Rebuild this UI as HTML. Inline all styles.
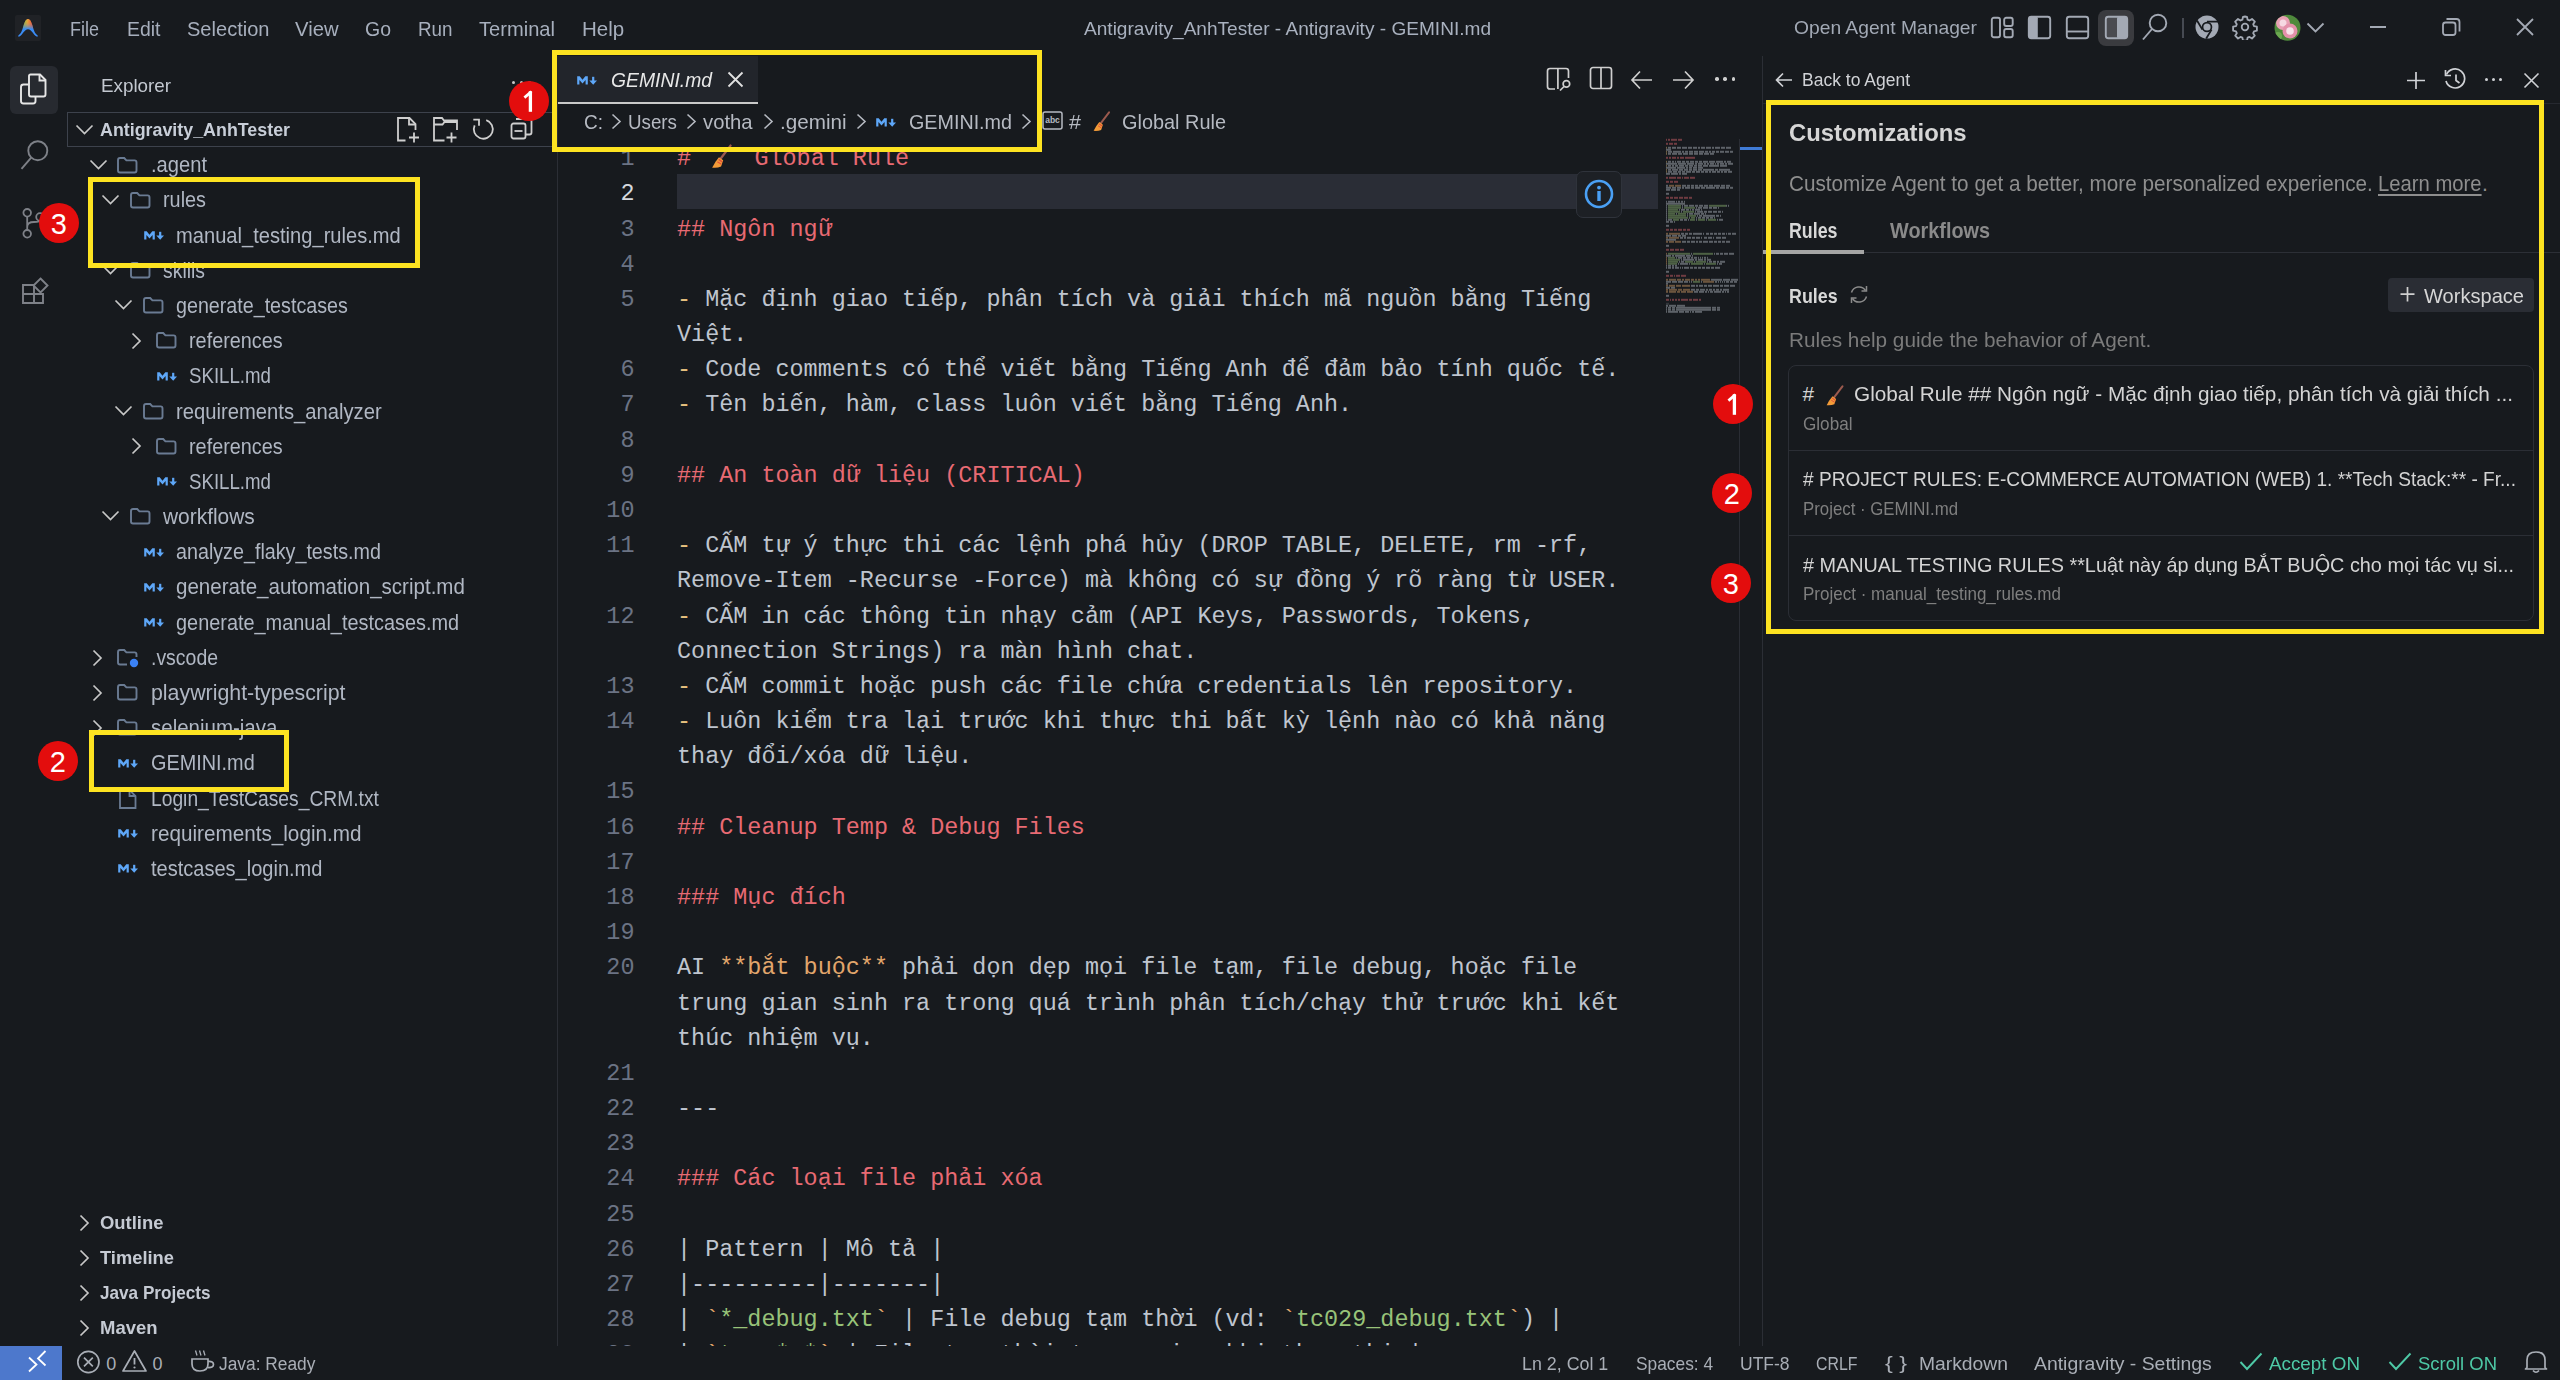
<!DOCTYPE html>
<html><head><meta charset="utf-8"><style>
html,body{margin:0;padding:0;}
body{width:2560px;height:1380px;background:#171a1e;position:relative;overflow:hidden;}
.t{position:absolute;white-space:pre;transform-origin:0 0;}
.r{position:absolute;}
.badge{width:40px;height:40px;border-radius:50%;background:#e30d0d;}
</style></head><body>
<div class="r" style="left:15px;top:15px;width:26px;height:26px;background:#202226;border-radius:2px;"></div>
<svg class="r" style="left:15px;top:15px;" width="26" height="26" viewBox="0 0 26 26"><defs><linearGradient id="lgv" x1="0" y1="0" x2="0" y2="1"><stop offset="0.15" stop-color="#ec8a3c"/><stop offset="0.55" stop-color="#3a8cf2"/><stop offset="1" stop-color="#3b8cf7"/></linearGradient><linearGradient id="lgh" x1="0" y1="0" x2="1" y2="0"><stop offset="0.3" stop-color="#7cc84e"/><stop offset="0.48" stop-color="#e3a43a"/><stop offset="0.68" stop-color="#f0503c"/></linearGradient><linearGradient id="lgm" x1="0" y1="0" x2="0" y2="1"><stop offset="0.2" stop-color="#fff"/><stop offset="0.55" stop-color="#000"/></linearGradient><mask id="mk"><rect width="26" height="26" fill="url(#lgm)"/></mask></defs><path id="lp" d="M3.6 20.2C6.8 18 7.6 13.5 8.7 10C10 6 11.3 4 13 4C14.7 4 16 6 17.3 10C18.4 13.5 19.2 18 22.4 20.2C23.2 20.8 22.8 22 21.6 21.6C18.2 20 16.8 14.2 13 14.2C9.2 14.2 7.8 20 4.4 21.6C3.2 22 2.8 20.8 3.6 20.2Z" fill="url(#lgv)"/><path d="M3.6 20.2C6.8 18 7.6 13.5 8.7 10C10 6 11.3 4 13 4C14.7 4 16 6 17.3 10C18.4 13.5 19.2 18 22.4 20.2C23.2 20.8 22.8 22 21.6 21.6C18.2 20 16.8 14.2 13 14.2C9.2 14.2 7.8 20 4.4 21.6C3.2 22 2.8 20.8 3.6 20.2Z" fill="url(#lgh)" mask="url(#mk)"/></svg>
<div class="t" style="transform:scaleX(0.8613);left:70.4px;top:18.64px;font-size:20.9px;line-height:20.9px;color:#a7afbd;font-family:'Liberation Sans', sans-serif;">File</div>
<div class="t" style="transform:scaleX(0.9306);left:126.8px;top:18.64px;font-size:20.9px;line-height:20.9px;color:#a7afbd;font-family:'Liberation Sans', sans-serif;">Edit</div>
<div class="t" style="transform:scaleX(0.9598);left:186.5px;top:18.64px;font-size:20.9px;line-height:20.9px;color:#a7afbd;font-family:'Liberation Sans', sans-serif;">Selection</div>
<div class="t" style="transform:scaleX(0.9687);left:295.3px;top:18.64px;font-size:20.9px;line-height:20.9px;color:#a7afbd;font-family:'Liberation Sans', sans-serif;">View</div>
<div class="t" style="transform:scaleX(0.9327);left:365px;top:18.64px;font-size:20.9px;line-height:20.9px;color:#a7afbd;font-family:'Liberation Sans', sans-serif;">Go</div>
<div class="t" style="transform:scaleX(0.9001);left:417.5px;top:18.64px;font-size:20.9px;line-height:20.9px;color:#a7afbd;font-family:'Liberation Sans', sans-serif;">Run</div>
<div class="t" style="transform:scaleX(0.9626);left:479px;top:18.64px;font-size:20.9px;line-height:20.9px;color:#a7afbd;font-family:'Liberation Sans', sans-serif;">Terminal</div>
<div class="t" style="transform:scaleX(0.9821);left:581.6px;top:18.64px;font-size:20.9px;line-height:20.9px;color:#a7afbd;font-family:'Liberation Sans', sans-serif;">Help</div>
<div class="t" style="transform:scaleX(1.0038);left:1084px;top:18.85px;font-size:19px;line-height:19px;color:#a9b1bf;font-family:'Liberation Sans', sans-serif;">Antigravity_AnhTester - Antigravity - GEMINI.md</div>
<div class="t" style="transform:scaleX(1.0404);left:1793.7px;top:18.98px;font-size:18.5px;line-height:18.5px;color:#a2a9b5;font-family:'Liberation Sans', sans-serif;">Open Agent Manager</div>
<svg class="r" style="left:1990px;top:16px;" width="25" height="23" viewBox="0 0 25 23"><rect x="1.8" y="1.8" width="8.2" height="19.4" rx="2" fill="none" stroke="#a3a9b4" stroke-width="1.9"/><rect x="14.2" y="1.8" width="8.5" height="8.2" rx="2" fill="none" stroke="#a3a9b4" stroke-width="1.9"/><rect x="14.2" y="13" width="8.5" height="8.2" rx="2" fill="none" stroke="#a3a9b4" stroke-width="1.9"/></svg>
<svg class="r" style="left:2027px;top:15px;" width="25" height="25" viewBox="0 0 25 25"><rect x="1.8" y="1.8" width="21.4" height="21.4" rx="2.5" fill="none" stroke="#a3a9b4" stroke-width="1.9"/><rect x="1.8" y="1.8" width="9" height="21.4" rx="1.5" fill="#a3a9b4"/></svg>
<svg class="r" style="left:2065px;top:15px;" width="25" height="25" viewBox="0 0 25 25"><rect x="1.8" y="1.8" width="21.4" height="21.4" rx="2.5" fill="none" stroke="#a3a9b4" stroke-width="1.9"/><path d="M1.8 16.5H23.2" stroke="#a3a9b4" stroke-width="1.9"/></svg>
<div class="r" style="left:2098px;top:10px;width:36px;height:36px;background:#3a3b3f;border-radius:8px;"></div>
<svg class="r" style="left:2104px;top:15px;" width="25" height="25" viewBox="0 0 25 25"><rect x="1.8" y="1.8" width="21.4" height="21.4" rx="2.5" fill="#4a4b50" stroke="#a3a9b4" stroke-width="1.9"/><rect x="13" y="1.8" width="10.2" height="21.4" rx="1.5" fill="#a3a9b4"/></svg>
<svg class="r" style="left:2141px;top:13px;" width="28" height="28" viewBox="0 0 28 28"><circle cx="17" cy="10" r="8.3" fill="none" stroke="#a3a9b4" stroke-width="1.9"/><path d="M11 16L2 26.5" stroke="#a3a9b4" stroke-width="1.9"/></svg>
<div class="r" style="left:2182px;top:18px;width:1.5px;height:20px;background:#464a52;"></div>
<svg class="r" style="left:2194px;top:14px;" width="26" height="26" viewBox="0 0 26 26"><circle cx="13" cy="13" r="11.5" fill="#a3a9b4"/><circle cx="13" cy="13" r="5.3" fill="#171a1e"/><circle cx="13" cy="13" r="3.6" fill="#a3a9b4"/><path d="M13 7.7H24M8.4 15.6L3 6.5M17.6 15.6L12.2 24.5" stroke="#171a1e" stroke-width="1.8"/></svg>
<svg class="r" style="left:2232px;top:14px;" width="26" height="26" viewBox="0 0 26 26"><path d="M13 2.5l2 .3.6 2.9 1.9.8 2.5-1.6 2.8 2.8-1.6 2.5.8 1.9 2.9.6v4l-2.9.6-.8 1.9 1.6 2.5-2.8 2.8-2.5-1.6-1.9.8-.6 2.9h-4l-.6-2.9-1.9-.8-2.5 1.6-2.8-2.8 1.6-2.5-.8-1.9-2.9-.6v-4l2.9-.6.8-1.9-1.6-2.5 2.8-2.8 2.5 1.6 1.9-.8.6-2.9z" fill="none" stroke="#a3a9b4" stroke-width="1.8" stroke-linejoin="round"/><circle cx="13" cy="13" r="3.3" fill="none" stroke="#a3a9b4" stroke-width="1.8"/></svg>
<svg class="r" style="left:2274px;top:14px;" width="28" height="28" viewBox="0 0 28 28"><defs><clipPath id="av"><circle cx="13.5" cy="13.8" r="13"/></clipPath></defs><g clip-path="url(#av)"><rect width="28" height="28" fill="#4f8a3c"/><circle cx="9" cy="9" r="7" fill="#e8a0b4"/><circle cx="9" cy="9" r="3.5" fill="#f6d9e2"/><circle cx="16" cy="17" r="7.5" fill="#e391aa"/><circle cx="16" cy="17" r="3.8" fill="#f8e2ea"/><circle cx="4" cy="22" r="4" fill="#6aa84f"/></g></svg>
<svg class="r" style="left:2306px;top:22px;" width="19" height="12" viewBox="0 0 19 12"><path d="M1.5 1.5L9.5 9.5L17.5 1.5" fill="none" stroke="#a3a9b4" stroke-width="1.8"/></svg>
<div class="r" style="left:2370px;top:26px;width:16px;height:2px;background:#a3a9b4;"></div>
<svg class="r" style="left:2442px;top:18px;" width="19" height="18" viewBox="0 0 19 18"><rect x="1" y="4.5" width="12.5" height="12.5" rx="2.5" fill="none" stroke="#a3a9b4" stroke-width="1.8"/><path d="M4.5 1H14.5Q17.5 1 17.5 4V13.5" fill="none" stroke="#a3a9b4" stroke-width="1.8"/></svg>
<svg class="r" style="left:2516px;top:18px;" width="18" height="18" viewBox="0 0 18 18"><path d="M1 1L17 17M17 1L1 17" stroke="#a3a9b4" stroke-width="1.8"/></svg>
<div class="r" style="left:10px;top:66px;width:48px;height:48px;background:#272a30;border-radius:6px;"></div>
<svg class="r" style="left:19px;top:73px;" width="30" height="32" viewBox="0 0 30 32"><path d="M9.5 11.5H4.5Q2 11.5 2 14V28Q2 30.5 4.5 30.5H14Q16.5 30.5 16.5 28V24" fill="none" stroke="#e6e6e6" stroke-width="1.9"/><path d="M10 3Q10 1.5 11.5 1.5H21L26.5 7V21.5Q26.5 23.5 24.5 23.5H12Q10 23.5 10 21.5Z" fill="none" stroke="#e6e6e6" stroke-width="1.9"/><path d="M20.5 1.5V7.5H26.5" fill="none" stroke="#e6e6e6" stroke-width="1.9"/></svg>
<svg class="r" style="left:19px;top:139px;" width="32" height="33" viewBox="0 0 32 33"><circle cx="18.8" cy="11.7" r="9.5" fill="none" stroke="#7e8188" stroke-width="1.9"/><path d="M12.2 18.7L2.5 29.8" stroke="#7e8188" stroke-width="1.9"/></svg>
<svg class="r" style="left:20px;top:205px;" width="30" height="34" viewBox="0 0 30 34"><circle cx="7.2" cy="7.8" r="3.8" fill="none" stroke="#7e8188" stroke-width="1.8"/><circle cx="7.2" cy="28.8" r="3.8" fill="none" stroke="#7e8188" stroke-width="1.8"/><circle cx="20" cy="12" r="3.8" fill="none" stroke="#7e8188" stroke-width="1.8"/><path d="M7.2 11.6V25M7.2 22Q7.2 17 14 17Q20 17 20 15.8" fill="none" stroke="#7e8188" stroke-width="1.8"/></svg>
<svg class="r" style="left:21px;top:276px;" width="30" height="30" viewBox="0 0 30 30"><path d="M2 9H13V27H2ZM2 18H22V27H13" fill="none" stroke="#7e8188" stroke-width="1.9"/><path d="M19.5 2.5L26.5 9.5L19.5 16.5L12.5 9.5Z" fill="none" stroke="#7e8188" stroke-width="1.9"/></svg>
<div class="t" style="transform:scaleX(1.0161);left:100.6px;top:76.58px;font-size:18.5px;line-height:18.5px;color:#c3c8d0;font-family:'Liberation Sans', sans-serif;">Explorer</div>
<div class="r" style="left:511.5px;top:81px;width:3.2px;height:3.2px;background:#c8c8c8;border-radius:50%;"></div>
<div class="r" style="left:519.5px;top:81px;width:3.2px;height:3.2px;background:#c8c8c8;border-radius:50%;"></div>
<div class="r" style="left:527.5px;top:81px;width:3.2px;height:3.2px;background:#c8c8c8;border-radius:50%;"></div>
<div class="r" style="left:67px;top:112px;width:488px;height:33px;border:1px solid #3d424c;"></div>
<svg class="r" style="left:75px;top:124px;" width="19" height="11" viewBox="0 0 19 11"><path d="M1.5 1.5L9.5 9.5L17.5 1.5" fill="none" stroke="#c8c8c8" stroke-width="1.7"/></svg>
<div class="t" style="transform:scaleX(0.9594);left:99.5px;top:121.09px;font-size:18.6px;line-height:18.6px;color:#c8ced8;font-family:'Liberation Sans', sans-serif;font-weight:700;">Antigravity_AnhTester</div>
<svg class="r" style="left:396px;top:116px;" width="27" height="28" viewBox="0 0 27 28"><path d="M9.5 24.5H2V2H13.5L19.5 8V14" fill="none" stroke="#cfcfcf" stroke-width="1.8"/><path d="M13 2V8.5H19.5" fill="none" stroke="#cfcfcf" stroke-width="1.8"/><path d="M18 16.5V26.5M13 21.5H23" stroke="#cfcfcf" stroke-width="1.8"/></svg>
<svg class="r" style="left:432px;top:116px;" width="28" height="28" viewBox="0 0 28 28"><path d="M12.5 24.5H2V2H10L12 4.5H25V14" fill="none" stroke="#cfcfcf" stroke-width="1.8"/><path d="M2 8.5H10.5L12.5 6H25" fill="none" stroke="#cfcfcf" stroke-width="1.8"/><path d="M19.5 16.5V26.5M14.5 21.5H24.5" stroke="#cfcfcf" stroke-width="1.8"/></svg>
<svg class="r" style="left:472px;top:117px;" width="24" height="24" viewBox="0 0 24 24"><path d="M14.24 3.17A9.5 9.5 0 1 1 2.62 8.34" fill="none" stroke="#cfcfcf" stroke-width="1.8"/><path d="M1.3 2.6H7V8.7" fill="none" stroke="#cfcfcf" stroke-width="1.8"/></svg>
<svg class="r" style="left:510px;top:117px;" width="24" height="24" viewBox="0 0 24 24"><rect x="1.5" y="6.5" width="14" height="15" rx="2" fill="none" stroke="#cfcfcf" stroke-width="1.8"/><path d="M6 2H19.5Q21.5 2 21.5 4V15.5Q21.5 17.5 19.5 17.5H16" fill="none" stroke="#cfcfcf" stroke-width="1.8"/><path d="M4.5 14H12.5" stroke="#cfcfcf" stroke-width="1.8"/></svg>
<svg class="r" style="left:88.5px;top:158.6px;" width="19" height="11" viewBox="0 0 19 11"><path d="M1.5 1.5L9.5 9.5L17.5 1.5" fill="none" stroke="#c8c8c8" stroke-width="1.7"/></svg>
<svg class="r" style="left:116.0px;top:155.5px;" width="23" height="20" viewBox="0 0 23 20"><path d="M2 4.2Q2 2 4 2H8.2L10.4 4.4H18.6Q20.5 4.4 20.5 6.4V14.6Q20.5 16.5 18.6 16.5H4Q2 16.5 2 14.5Z" fill="none" stroke="#6a7b93" stroke-width="1.9"/></svg>
<div class="t" style="transform:scaleX(0.9414);left:150.6px;top:155.31px;font-size:21.4px;line-height:21.4px;color:#b0b7c3;font-family:'Liberation Sans', sans-serif;">.agent</div>
<svg class="r" style="left:101.35px;top:193.78px;" width="19" height="11" viewBox="0 0 19 11"><path d="M1.5 1.5L9.5 9.5L17.5 1.5" fill="none" stroke="#c8c8c8" stroke-width="1.7"/></svg>
<svg class="r" style="left:128.85px;top:190.68px;" width="23" height="20" viewBox="0 0 23 20"><path d="M2 4.2Q2 2 4 2H8.2L10.4 4.4H18.6Q20.5 4.4 20.5 6.4V14.6Q20.5 16.5 18.6 16.5H4Q2 16.5 2 14.5Z" fill="none" stroke="#6a7b93" stroke-width="1.9"/></svg>
<div class="t" style="transform:scaleX(0.9272);left:163.45px;top:190.49px;font-size:21.4px;line-height:21.4px;color:#b0b7c3;font-family:'Liberation Sans', sans-serif;">rules</div>
<svg class="r" style="left:143.7px;top:230.95999999999998px;" width="21" height="10" viewBox="0 0 21 10"><path d="M0.2 8.6V0.2H2.7L5.5 3.7L8.3 0.2H10.8V8.6H8.6V4L5.5 7.6L2.4 4V8.6Z" fill="#5ea7f8"/><rect x="15.1" y="0.8" width="2.2" height="4.4" fill="#5ea7f8"/><path d="M12.3 4.6H20L16.2 8.7Z" fill="#5ea7f8"/></svg>
<div class="t" style="transform:scaleX(0.9406);left:176.29999999999998px;top:225.67px;font-size:21.4px;line-height:21.4px;color:#b0b7c3;font-family:'Liberation Sans', sans-serif;">manual_testing_rules.md</div>
<svg class="r" style="left:101.35px;top:264.14000000000004px;" width="19" height="11" viewBox="0 0 19 11"><path d="M1.5 1.5L9.5 9.5L17.5 1.5" fill="none" stroke="#c8c8c8" stroke-width="1.7"/></svg>
<svg class="r" style="left:128.85px;top:261.04px;" width="23" height="20" viewBox="0 0 23 20"><path d="M2 4.2Q2 2 4 2H8.2L10.4 4.4H18.6Q20.5 4.4 20.5 6.4V14.6Q20.5 16.5 18.6 16.5H4Q2 16.5 2 14.5Z" fill="none" stroke="#6a7b93" stroke-width="1.9"/></svg>
<div class="t" style="transform:scaleX(0.9063);left:163.45px;top:260.85px;font-size:21.4px;line-height:21.4px;color:#b0b7c3;font-family:'Liberation Sans', sans-serif;">skills</div>
<svg class="r" style="left:114.2px;top:299.32000000000005px;" width="19" height="11" viewBox="0 0 19 11"><path d="M1.5 1.5L9.5 9.5L17.5 1.5" fill="none" stroke="#c8c8c8" stroke-width="1.7"/></svg>
<svg class="r" style="left:141.7px;top:296.22px;" width="23" height="20" viewBox="0 0 23 20"><path d="M2 4.2Q2 2 4 2H8.2L10.4 4.4H18.6Q20.5 4.4 20.5 6.4V14.6Q20.5 16.5 18.6 16.5H4Q2 16.5 2 14.5Z" fill="none" stroke="#6a7b93" stroke-width="1.9"/></svg>
<div class="t" style="transform:scaleX(0.9202);left:176.29999999999998px;top:296.03px;font-size:21.4px;line-height:21.4px;color:#b0b7c3;font-family:'Liberation Sans', sans-serif;">generate_testcases</div>
<svg class="r" style="left:130.55px;top:331.90000000000003px;" width="11" height="18" viewBox="0 0 11 18"><path d="M1.5 1.5L9 9L1.5 16.5" fill="none" stroke="#c8c8c8" stroke-width="1.7"/></svg>
<svg class="r" style="left:154.55px;top:331.40000000000003px;" width="23" height="20" viewBox="0 0 23 20"><path d="M2 4.2Q2 2 4 2H8.2L10.4 4.4H18.6Q20.5 4.4 20.5 6.4V14.6Q20.5 16.5 18.6 16.5H4Q2 16.5 2 14.5Z" fill="none" stroke="#6a7b93" stroke-width="1.9"/></svg>
<div class="t" style="transform:scaleX(0.9271);left:189.14999999999998px;top:331.21px;font-size:21.4px;line-height:21.4px;color:#b0b7c3;font-family:'Liberation Sans', sans-serif;">references</div>
<svg class="r" style="left:156.55px;top:371.68000000000006px;" width="21" height="10" viewBox="0 0 21 10"><path d="M0.2 8.6V0.2H2.7L5.5 3.7L8.3 0.2H10.8V8.6H8.6V4L5.5 7.6L2.4 4V8.6Z" fill="#5ea7f8"/><rect x="15.1" y="0.8" width="2.2" height="4.4" fill="#5ea7f8"/><path d="M12.3 4.6H20L16.2 8.7Z" fill="#5ea7f8"/></svg>
<div class="t" style="transform:scaleX(0.8729);left:189.14999999999998px;top:366.39px;font-size:21.4px;line-height:21.4px;color:#b0b7c3;font-family:'Liberation Sans', sans-serif;">SKILL.md</div>
<svg class="r" style="left:114.2px;top:404.86px;" width="19" height="11" viewBox="0 0 19 11"><path d="M1.5 1.5L9.5 9.5L17.5 1.5" fill="none" stroke="#c8c8c8" stroke-width="1.7"/></svg>
<svg class="r" style="left:141.7px;top:401.76px;" width="23" height="20" viewBox="0 0 23 20"><path d="M2 4.2Q2 2 4 2H8.2L10.4 4.4H18.6Q20.5 4.4 20.5 6.4V14.6Q20.5 16.5 18.6 16.5H4Q2 16.5 2 14.5Z" fill="none" stroke="#6a7b93" stroke-width="1.9"/></svg>
<div class="t" style="transform:scaleX(0.9453);left:176.29999999999998px;top:401.57px;font-size:21.4px;line-height:21.4px;color:#b0b7c3;font-family:'Liberation Sans', sans-serif;">requirements_analyzer</div>
<svg class="r" style="left:130.55px;top:437.44000000000005px;" width="11" height="18" viewBox="0 0 11 18"><path d="M1.5 1.5L9 9L1.5 16.5" fill="none" stroke="#c8c8c8" stroke-width="1.7"/></svg>
<svg class="r" style="left:154.55px;top:436.94000000000005px;" width="23" height="20" viewBox="0 0 23 20"><path d="M2 4.2Q2 2 4 2H8.2L10.4 4.4H18.6Q20.5 4.4 20.5 6.4V14.6Q20.5 16.5 18.6 16.5H4Q2 16.5 2 14.5Z" fill="none" stroke="#6a7b93" stroke-width="1.9"/></svg>
<div class="t" style="transform:scaleX(0.9271);left:189.14999999999998px;top:436.75px;font-size:21.4px;line-height:21.4px;color:#b0b7c3;font-family:'Liberation Sans', sans-serif;">references</div>
<svg class="r" style="left:156.55px;top:477.22px;" width="21" height="10" viewBox="0 0 21 10"><path d="M0.2 8.6V0.2H2.7L5.5 3.7L8.3 0.2H10.8V8.6H8.6V4L5.5 7.6L2.4 4V8.6Z" fill="#5ea7f8"/><rect x="15.1" y="0.8" width="2.2" height="4.4" fill="#5ea7f8"/><path d="M12.3 4.6H20L16.2 8.7Z" fill="#5ea7f8"/></svg>
<div class="t" style="transform:scaleX(0.8729);left:189.14999999999998px;top:471.93px;font-size:21.4px;line-height:21.4px;color:#b0b7c3;font-family:'Liberation Sans', sans-serif;">SKILL.md</div>
<svg class="r" style="left:101.35px;top:510.4000000000001px;" width="19" height="11" viewBox="0 0 19 11"><path d="M1.5 1.5L9.5 9.5L17.5 1.5" fill="none" stroke="#c8c8c8" stroke-width="1.7"/></svg>
<svg class="r" style="left:128.85px;top:507.30000000000007px;" width="23" height="20" viewBox="0 0 23 20"><path d="M2 4.2Q2 2 4 2H8.2L10.4 4.4H18.6Q20.5 4.4 20.5 6.4V14.6Q20.5 16.5 18.6 16.5H4Q2 16.5 2 14.5Z" fill="none" stroke="#6a7b93" stroke-width="1.9"/></svg>
<div class="t" style="transform:scaleX(0.9776);left:163.45px;top:507.11px;font-size:21.4px;line-height:21.4px;color:#b0b7c3;font-family:'Liberation Sans', sans-serif;">workflows</div>
<svg class="r" style="left:143.7px;top:547.58px;" width="21" height="10" viewBox="0 0 21 10"><path d="M0.2 8.6V0.2H2.7L5.5 3.7L8.3 0.2H10.8V8.6H8.6V4L5.5 7.6L2.4 4V8.6Z" fill="#5ea7f8"/><rect x="15.1" y="0.8" width="2.2" height="4.4" fill="#5ea7f8"/><path d="M12.3 4.6H20L16.2 8.7Z" fill="#5ea7f8"/></svg>
<div class="t" style="transform:scaleX(0.9215);left:176.29999999999998px;top:542.29px;font-size:21.4px;line-height:21.4px;color:#b0b7c3;font-family:'Liberation Sans', sans-serif;">analyze_flaky_tests.md</div>
<svg class="r" style="left:143.7px;top:582.76px;" width="21" height="10" viewBox="0 0 21 10"><path d="M0.2 8.6V0.2H2.7L5.5 3.7L8.3 0.2H10.8V8.6H8.6V4L5.5 7.6L2.4 4V8.6Z" fill="#5ea7f8"/><rect x="15.1" y="0.8" width="2.2" height="4.4" fill="#5ea7f8"/><path d="M12.3 4.6H20L16.2 8.7Z" fill="#5ea7f8"/></svg>
<div class="t" style="transform:scaleX(0.9603);left:176.29999999999998px;top:577.47px;font-size:21.4px;line-height:21.4px;color:#b0b7c3;font-family:'Liberation Sans', sans-serif;">generate_automation_script.md</div>
<svg class="r" style="left:143.7px;top:617.94px;" width="21" height="10" viewBox="0 0 21 10"><path d="M0.2 8.6V0.2H2.7L5.5 3.7L8.3 0.2H10.8V8.6H8.6V4L5.5 7.6L2.4 4V8.6Z" fill="#5ea7f8"/><rect x="15.1" y="0.8" width="2.2" height="4.4" fill="#5ea7f8"/><path d="M12.3 4.6H20L16.2 8.7Z" fill="#5ea7f8"/></svg>
<div class="t" style="transform:scaleX(0.9300);left:176.29999999999998px;top:612.65px;font-size:21.4px;line-height:21.4px;color:#b0b7c3;font-family:'Liberation Sans', sans-serif;">generate_manual_testcases.md</div>
<svg class="r" style="left:92.0px;top:648.52px;" width="11" height="18" viewBox="0 0 11 18"><path d="M1.5 1.5L9 9L1.5 16.5" fill="none" stroke="#c8c8c8" stroke-width="1.7"/></svg>
<svg class="r" style="left:116.0px;top:648.02px;" width="23" height="20" viewBox="0 0 23 20"><path d="M2 4.2Q2 2 4 2H8.2L10.4 4.4H18.6Q20.5 4.4 20.5 6.4V9" fill="none" stroke="#6a7b93" stroke-width="1.9"/><path d="M11 16.5H4Q2 16.5 2 14.5V4" fill="none" stroke="#6a7b93" stroke-width="1.9"/><circle cx="18" cy="15" r="4.2" fill="#3b82f6"/></svg>
<div class="t" style="transform:scaleX(0.9089);left:150.6px;top:647.83px;font-size:21.4px;line-height:21.4px;color:#b0b7c3;font-family:'Liberation Sans', sans-serif;">.vscode</div>
<svg class="r" style="left:92.0px;top:683.7px;" width="11" height="18" viewBox="0 0 11 18"><path d="M1.5 1.5L9 9L1.5 16.5" fill="none" stroke="#c8c8c8" stroke-width="1.7"/></svg>
<svg class="r" style="left:116.0px;top:683.2px;" width="23" height="20" viewBox="0 0 23 20"><path d="M2 4.2Q2 2 4 2H8.2L10.4 4.4H18.6Q20.5 4.4 20.5 6.4V14.6Q20.5 16.5 18.6 16.5H4Q2 16.5 2 14.5Z" fill="none" stroke="#6a7b93" stroke-width="1.9"/></svg>
<div class="t" style="transform:scaleX(0.9976);left:150.6px;top:683.01px;font-size:21.4px;line-height:21.4px;color:#b0b7c3;font-family:'Liberation Sans', sans-serif;">playwright-typescript</div>
<svg class="r" style="left:92.0px;top:718.88px;" width="11" height="18" viewBox="0 0 11 18"><path d="M1.5 1.5L9 9L1.5 16.5" fill="none" stroke="#c8c8c8" stroke-width="1.7"/></svg>
<svg class="r" style="left:116.0px;top:718.38px;" width="23" height="20" viewBox="0 0 23 20"><path d="M2 4.2Q2 2 4 2H8.2L10.4 4.4H18.6Q20.5 4.4 20.5 6.4V14.6Q20.5 16.5 18.6 16.5H4Q2 16.5 2 14.5Z" fill="none" stroke="#6a7b93" stroke-width="1.9"/></svg>
<div class="t" style="transform:scaleX(0.9578);left:150.6px;top:718.19px;font-size:21.4px;line-height:21.4px;color:#b0b7c3;font-family:'Liberation Sans', sans-serif;">selenium-java</div>
<svg class="r" style="left:118.0px;top:758.66px;" width="21" height="10" viewBox="0 0 21 10"><path d="M0.2 8.6V0.2H2.7L5.5 3.7L8.3 0.2H10.8V8.6H8.6V4L5.5 7.6L2.4 4V8.6Z" fill="#5ea7f8"/><rect x="15.1" y="0.8" width="2.2" height="4.4" fill="#5ea7f8"/><path d="M12.3 4.6H20L16.2 8.7Z" fill="#5ea7f8"/></svg>
<div class="t" style="transform:scaleX(0.9282);left:150.6px;top:753.37px;font-size:21.4px;line-height:21.4px;color:#b0b7c3;font-family:'Liberation Sans', sans-serif;">GEMINI.md</div>
<svg class="r" style="left:118.0px;top:788.24px;" width="20" height="22" viewBox="0 0 20 22"><path d="M2 2H11.5L17.5 8V20H2Z" fill="none" stroke="#6a7b93" stroke-width="1.8"/><path d="M11.5 2V8H17.5" fill="none" stroke="#6a7b93" stroke-width="1.8"/></svg>
<div class="t" style="transform:scaleX(0.9000);left:150.6px;top:788.55px;font-size:21.4px;line-height:21.4px;color:#b0b7c3;font-family:'Liberation Sans', sans-serif;">Login_TestCases_CRM.txt</div>
<svg class="r" style="left:118.0px;top:829.02px;" width="21" height="10" viewBox="0 0 21 10"><path d="M0.2 8.6V0.2H2.7L5.5 3.7L8.3 0.2H10.8V8.6H8.6V4L5.5 7.6L2.4 4V8.6Z" fill="#5ea7f8"/><rect x="15.1" y="0.8" width="2.2" height="4.4" fill="#5ea7f8"/><path d="M12.3 4.6H20L16.2 8.7Z" fill="#5ea7f8"/></svg>
<div class="t" style="transform:scaleX(0.9674);left:150.6px;top:823.73px;font-size:21.4px;line-height:21.4px;color:#b0b7c3;font-family:'Liberation Sans', sans-serif;">requirements_login.md</div>
<svg class="r" style="left:118.0px;top:864.2px;" width="21" height="10" viewBox="0 0 21 10"><path d="M0.2 8.6V0.2H2.7L5.5 3.7L8.3 0.2H10.8V8.6H8.6V4L5.5 7.6L2.4 4V8.6Z" fill="#5ea7f8"/><rect x="15.1" y="0.8" width="2.2" height="4.4" fill="#5ea7f8"/><path d="M12.3 4.6H20L16.2 8.7Z" fill="#5ea7f8"/></svg>
<div class="t" style="transform:scaleX(0.9361);left:150.6px;top:858.91px;font-size:21.4px;line-height:21.4px;color:#b0b7c3;font-family:'Liberation Sans', sans-serif;">testcases_login.md</div>
<svg class="r" style="left:78.5px;top:1214.2px;" width="11" height="18" viewBox="0 0 11 18"><path d="M1.5 1.5L9 9L1.5 16.5" fill="none" stroke="#c8c8c8" stroke-width="1.7"/></svg>
<div class="t" style="transform:scaleX(0.9915);left:99.5px;top:1214.39px;font-size:18.6px;line-height:18.6px;color:#c5cad3;font-family:'Liberation Sans', sans-serif;font-weight:700;">Outline</div>
<svg class="r" style="left:78.5px;top:1249.2px;" width="11" height="18" viewBox="0 0 11 18"><path d="M1.5 1.5L9 9L1.5 16.5" fill="none" stroke="#c8c8c8" stroke-width="1.7"/></svg>
<div class="t" style="transform:scaleX(0.9854);left:99.5px;top:1249.39px;font-size:18.6px;line-height:18.6px;color:#c5cad3;font-family:'Liberation Sans', sans-serif;font-weight:700;">Timeline</div>
<svg class="r" style="left:78.5px;top:1284.2px;" width="11" height="18" viewBox="0 0 11 18"><path d="M1.5 1.5L9 9L1.5 16.5" fill="none" stroke="#c8c8c8" stroke-width="1.7"/></svg>
<div class="t" style="transform:scaleX(0.9216);left:99.5px;top:1284.39px;font-size:18.6px;line-height:18.6px;color:#c5cad3;font-family:'Liberation Sans', sans-serif;font-weight:700;">Java Projects</div>
<svg class="r" style="left:78.5px;top:1319.2px;" width="11" height="18" viewBox="0 0 11 18"><path d="M1.5 1.5L9 9L1.5 16.5" fill="none" stroke="#c8c8c8" stroke-width="1.7"/></svg>
<div class="t" style="transform:scaleX(0.9935);left:99.5px;top:1319.39px;font-size:18.6px;line-height:18.6px;color:#c5cad3;font-family:'Liberation Sans', sans-serif;font-weight:700;">Maven</div>
<div class="r" style="left:557px;top:56px;width:1px;height:1290px;background:#2b2e35;"></div>
<div class="r" style="left:557px;top:56px;width:201px;height:46px;background:#22252b;"></div>
<div class="r" style="left:558px;top:102px;width:200px;height:2.2px;background:#c9c9c9;"></div>
<svg class="r" style="left:577px;top:75.6px;" width="21" height="10" viewBox="0 0 21 10"><path d="M0.2 8.6V0.2H2.7L5.5 3.7L8.3 0.2H10.8V8.6H8.6V4L5.5 7.6L2.4 4V8.6Z" fill="#5ea7f8"/><rect x="15.1" y="0.8" width="2.2" height="4.4" fill="#5ea7f8"/><path d="M12.3 4.6H20L16.2 8.7Z" fill="#5ea7f8"/></svg>
<div class="t" style="transform:scaleX(0.9298);left:610.6px;top:69.82px;font-size:20.8px;line-height:20.8px;color:#e8e8e8;font-family:'Liberation Sans', sans-serif;font-style:italic;">GEMINI.md</div>
<svg class="r" style="left:727px;top:71px;" width="17" height="17" viewBox="0 0 17 17"><path d="M1.5 1.5L15.5 15.5M15.5 1.5L1.5 15.5" stroke="#e0e0e0" stroke-width="1.8"/></svg>
<svg class="r" style="left:1546px;top:67px;" width="26" height="26" viewBox="0 0 26 26"><path d="M11.9 1.5H4Q1.5 1.5 1.5 4V19.5Q1.5 22 4 22H9M11.9 1.5V22M11.9 1.5H20Q22.5 1.5 22.5 4V11" fill="none" stroke="#cfcfcf" stroke-width="1.7"/><circle cx="20.4" cy="16.9" r="3.3" fill="none" stroke="#cfcfcf" stroke-width="1.7"/><path d="M18 19.5L14 23.5" stroke="#cfcfcf" stroke-width="1.7"/></svg>
<svg class="r" style="left:1589px;top:66px;" width="25" height="25" viewBox="0 0 25 25"><rect x="1.5" y="1.5" width="21" height="21" rx="2.5" fill="none" stroke="#cfcfcf" stroke-width="1.7"/><path d="M12 1.5V22.5" stroke="#cfcfcf" stroke-width="1.7"/></svg>
<svg class="r" style="left:1630px;top:70px;" width="24" height="20" viewBox="0 0 24 20"><path d="M10 1.5L2 10L10 18.5M2 10H22" fill="none" stroke="#cfcfcf" stroke-width="1.7"/></svg>
<svg class="r" style="left:1671px;top:70px;" width="24" height="20" viewBox="0 0 24 20"><path d="M14 1.5L22 10L14 18.5M22 10H2" fill="none" stroke="#cfcfcf" stroke-width="1.7"/></svg>
<div class="r" style="left:1715.3px;top:77.3px;width:3.4px;height:3.4px;background:#cfcfcf;border-radius:50%;"></div>
<div class="r" style="left:1723.3999999999999px;top:77.3px;width:3.4px;height:3.4px;background:#cfcfcf;border-radius:50%;"></div>
<div class="r" style="left:1731.5px;top:77.3px;width:3.4px;height:3.4px;background:#cfcfcf;border-radius:50%;"></div>
<div class="t" style="transform:scaleX(0.9129);left:584.3px;top:112.02px;font-size:20.8px;line-height:20.8px;color:#b6bac2;font-family:'Liberation Sans', sans-serif;">C:</div>
<svg class="r" style="left:610.6px;top:113px;" width="11" height="17" viewBox="0 0 11 17"><path d="M1.5 1.5L9 8.5L1.5 15.5" fill="none" stroke="#b6bac2" stroke-width="1.6"/></svg>
<svg class="r" style="left:686px;top:113px;" width="11" height="17" viewBox="0 0 11 17"><path d="M1.5 1.5L9 8.5L1.5 15.5" fill="none" stroke="#b6bac2" stroke-width="1.6"/></svg>
<svg class="r" style="left:763.4px;top:113px;" width="11" height="17" viewBox="0 0 11 17"><path d="M1.5 1.5L9 8.5L1.5 15.5" fill="none" stroke="#b6bac2" stroke-width="1.6"/></svg>
<svg class="r" style="left:856px;top:113px;" width="11" height="17" viewBox="0 0 11 17"><path d="M1.5 1.5L9 8.5L1.5 15.5" fill="none" stroke="#b6bac2" stroke-width="1.6"/></svg>
<svg class="r" style="left:1021px;top:113px;" width="11" height="17" viewBox="0 0 11 17"><path d="M1.5 1.5L9 8.5L1.5 15.5" fill="none" stroke="#b6bac2" stroke-width="1.6"/></svg>
<div class="t" style="transform:scaleX(0.9022);left:628px;top:112.02px;font-size:20.8px;line-height:20.8px;color:#b6bac2;font-family:'Liberation Sans', sans-serif;">Users</div>
<div class="t" style="transform:scaleX(0.9746);left:703.4px;top:112.02px;font-size:20.8px;line-height:20.8px;color:#b6bac2;font-family:'Liberation Sans', sans-serif;">votha</div>
<div class="t" style="transform:scaleX(0.9933);left:780.3px;top:112.02px;font-size:20.8px;line-height:20.8px;color:#b6bac2;font-family:'Liberation Sans', sans-serif;">.gemini</div>
<svg class="r" style="left:876px;top:117.6px;" width="21" height="10" viewBox="0 0 21 10"><path d="M0.2 8.6V0.2H2.7L5.5 3.7L8.3 0.2H10.8V8.6H8.6V4L5.5 7.6L2.4 4V8.6Z" fill="#5ea7f8"/><rect x="15.1" y="0.8" width="2.2" height="4.4" fill="#5ea7f8"/><path d="M12.3 4.6H20L16.2 8.7Z" fill="#5ea7f8"/></svg>
<div class="t" style="transform:scaleX(0.9482);left:908.8px;top:112.02px;font-size:20.8px;line-height:20.8px;color:#b6bac2;font-family:'Liberation Sans', sans-serif;">GEMINI.md</div>
<svg class="r" style="left:1042px;top:111px;" width="21" height="19" viewBox="0 0 21 19"><rect x="1" y="1" width="19" height="17" rx="2" fill="none" stroke="#b6bac2" stroke-width="1.5"/><text x="10.5" y="12.3" font-family="Liberation Sans" font-size="8.5" font-weight="700" fill="#b6bac2" text-anchor="middle">abc</text></svg>
<div class="t" style="transform:scaleX(1.0364);left:1069px;top:112.02px;font-size:20.8px;line-height:20.8px;color:#b6bac2;font-family:'Liberation Sans', sans-serif;">#</div>
<svg class="r" style="left:1091px;top:111px;" width="20" height="22" viewBox="0 0 20 22"><g transform="scale(0.88)"><path d="M20.5 1.5L11 14" stroke="#9c5a4e" stroke-width="2.2" stroke-linecap="round"/><path d="M9.5 12.5L13.5 15.5L11.5 21.5Q8 23 3 22.5Q5.5 17 9.5 12.5Z" fill="#f29b38"/><path d="M9.2 14.6L12.6 17" stroke="#e0503a" stroke-width="1.3"/><path d="M8 16.8L11.8 19.2" stroke="#e0503a" stroke-width="1.1"/></g></svg>
<div class="t" style="transform:scaleX(0.9570);left:1121.6px;top:112.02px;font-size:20.8px;line-height:20.8px;color:#b6bac2;font-family:'Liberation Sans', sans-serif;">Global Rule</div>
<div class="r" style="left:677px;top:174px;width:981px;height:35px;background:#2a2d36;"></div>
<div class="r" style="left:1576px;top:171px;width:46px;height:47px;background:#1d2025;border:1px solid #2f333b;border-radius:7px;box-sizing:border-box;"></div>
<svg class="r" style="left:1583px;top:178px;" width="32" height="32" viewBox="0 0 32 32"><circle cx="16" cy="16" r="13" fill="none" stroke="#4aa0f5" stroke-width="2.6"/><circle cx="16" cy="9.6" r="1.9" fill="#4aa0f5"/><rect x="14.3" y="13" width="3.4" height="10" fill="#4aa0f5"/></svg>
<div class="t" style="left:677px;top:147.18px;font-size:23.45px;line-height:23.45px;color:#e86a73;font-family:'Liberation Mono', monospace;">#</div>
<svg class="r" style="left:709px;top:144px;" width="24" height="26" viewBox="0 0 24 26"><g transform="scale(1.05)"><path d="M20.5 1.5L11 14" stroke="#9c5a4e" stroke-width="2.2" stroke-linecap="round"/><path d="M9.5 12.5L13.5 15.5L11.5 21.5Q8 23 3 22.5Q5.5 17 9.5 12.5Z" fill="#f29b38"/><path d="M9.2 14.6L12.6 17" stroke="#e0503a" stroke-width="1.3"/><path d="M8 16.8L11.8 19.2" stroke="#e0503a" stroke-width="1.1"/></g></svg>
<div class="t" style="left:754.4px;top:147.18px;font-size:23.45px;line-height:23.45px;color:#e86a73;font-family:'Liberation Mono', monospace;">Global Rule</div>
<div class="t" style="left:620.43px;top:147.18px;font-size:23.45px;line-height:23.45px;color:#6b7384;font-family:'Liberation Mono', monospace;">1</div>
<div class="t" style="left:620.43px;top:182.36px;font-size:23.45px;line-height:23.45px;color:#d4d7dd;font-family:'Liberation Mono', monospace;">2</div>
<div class="t" style="left:677px;top:182.36px;font-size:23.45px;line-height:23.45px;color:#bfc5cf;font-family:'Liberation Mono', monospace;"></div>
<div class="t" style="left:620.43px;top:217.54px;font-size:23.45px;line-height:23.45px;color:#6b7384;font-family:'Liberation Mono', monospace;">3</div>
<div class="t" style="left:677px;top:217.54px;font-size:23.45px;line-height:23.45px;color:#bfc5cf;font-family:'Liberation Mono', monospace;"><span style="color:#e86a73">## Ngôn ngữ</span></div>
<div class="t" style="left:620.43px;top:252.72px;font-size:23.45px;line-height:23.45px;color:#6b7384;font-family:'Liberation Mono', monospace;">4</div>
<div class="t" style="left:677px;top:252.72px;font-size:23.45px;line-height:23.45px;color:#bfc5cf;font-family:'Liberation Mono', monospace;"></div>
<div class="t" style="left:620.43px;top:287.90px;font-size:23.45px;line-height:23.45px;color:#6b7384;font-family:'Liberation Mono', monospace;">5</div>
<div class="t" style="left:677px;top:287.90px;font-size:23.45px;line-height:23.45px;color:#bfc5cf;font-family:'Liberation Mono', monospace;"><span style="color:#e6c07e">-</span><span style="color:#bfc5cf"> Mặc định giao tiếp, phân tích và giải thích mã nguồn bằng Tiếng</span></div>
<div class="t" style="left:677px;top:323.08px;font-size:23.45px;line-height:23.45px;color:#bfc5cf;font-family:'Liberation Mono', monospace;"><span style="color:#bfc5cf">Việt.</span></div>
<div class="t" style="left:620.43px;top:358.26px;font-size:23.45px;line-height:23.45px;color:#6b7384;font-family:'Liberation Mono', monospace;">6</div>
<div class="t" style="left:677px;top:358.26px;font-size:23.45px;line-height:23.45px;color:#bfc5cf;font-family:'Liberation Mono', monospace;"><span style="color:#e6c07e">-</span><span style="color:#bfc5cf"> Code comments có thể viết bằng Tiếng Anh để đảm bảo tính quốc tế.</span></div>
<div class="t" style="left:620.43px;top:393.44px;font-size:23.45px;line-height:23.45px;color:#6b7384;font-family:'Liberation Mono', monospace;">7</div>
<div class="t" style="left:677px;top:393.44px;font-size:23.45px;line-height:23.45px;color:#bfc5cf;font-family:'Liberation Mono', monospace;"><span style="color:#e6c07e">-</span><span style="color:#bfc5cf"> Tên biến, hàm, class luôn viết bằng Tiếng Anh.</span></div>
<div class="t" style="left:620.43px;top:428.62px;font-size:23.45px;line-height:23.45px;color:#6b7384;font-family:'Liberation Mono', monospace;">8</div>
<div class="t" style="left:677px;top:428.62px;font-size:23.45px;line-height:23.45px;color:#bfc5cf;font-family:'Liberation Mono', monospace;"></div>
<div class="t" style="left:620.43px;top:463.80px;font-size:23.45px;line-height:23.45px;color:#6b7384;font-family:'Liberation Mono', monospace;">9</div>
<div class="t" style="left:677px;top:463.80px;font-size:23.45px;line-height:23.45px;color:#bfc5cf;font-family:'Liberation Mono', monospace;"><span style="color:#e86a73">## An toàn dữ liệu (CRITICAL)</span></div>
<div class="t" style="left:606.36px;top:498.98px;font-size:23.45px;line-height:23.45px;color:#6b7384;font-family:'Liberation Mono', monospace;">10</div>
<div class="t" style="left:677px;top:498.98px;font-size:23.45px;line-height:23.45px;color:#bfc5cf;font-family:'Liberation Mono', monospace;"></div>
<div class="t" style="left:606.36px;top:534.16px;font-size:23.45px;line-height:23.45px;color:#6b7384;font-family:'Liberation Mono', monospace;">11</div>
<div class="t" style="left:677px;top:534.16px;font-size:23.45px;line-height:23.45px;color:#bfc5cf;font-family:'Liberation Mono', monospace;"><span style="color:#e6c07e">-</span><span style="color:#bfc5cf"> CẤM tự ý thực thi các lệnh phá hủy (DROP TABLE, DELETE, rm -rf,</span></div>
<div class="t" style="left:677px;top:569.34px;font-size:23.45px;line-height:23.45px;color:#bfc5cf;font-family:'Liberation Mono', monospace;"><span style="color:#bfc5cf">Remove-Item -Recurse -Force) mà không có sự đồng ý rõ ràng từ USER.</span></div>
<div class="t" style="left:606.36px;top:604.52px;font-size:23.45px;line-height:23.45px;color:#6b7384;font-family:'Liberation Mono', monospace;">12</div>
<div class="t" style="left:677px;top:604.52px;font-size:23.45px;line-height:23.45px;color:#bfc5cf;font-family:'Liberation Mono', monospace;"><span style="color:#e6c07e">-</span><span style="color:#bfc5cf"> CẤM in các thông tin nhạy cảm (API Keys, Passwords, Tokens,</span></div>
<div class="t" style="left:677px;top:639.70px;font-size:23.45px;line-height:23.45px;color:#bfc5cf;font-family:'Liberation Mono', monospace;"><span style="color:#bfc5cf">Connection Strings) ra màn hình chat.</span></div>
<div class="t" style="left:606.36px;top:674.88px;font-size:23.45px;line-height:23.45px;color:#6b7384;font-family:'Liberation Mono', monospace;">13</div>
<div class="t" style="left:677px;top:674.88px;font-size:23.45px;line-height:23.45px;color:#bfc5cf;font-family:'Liberation Mono', monospace;"><span style="color:#e6c07e">-</span><span style="color:#bfc5cf"> CẤM commit hoặc push các file chứa credentials lên repository.</span></div>
<div class="t" style="left:606.36px;top:710.06px;font-size:23.45px;line-height:23.45px;color:#6b7384;font-family:'Liberation Mono', monospace;">14</div>
<div class="t" style="left:677px;top:710.06px;font-size:23.45px;line-height:23.45px;color:#bfc5cf;font-family:'Liberation Mono', monospace;"><span style="color:#e6c07e">-</span><span style="color:#bfc5cf"> Luôn kiểm tra lại trước khi thực thi bất kỳ lệnh nào có khả năng</span></div>
<div class="t" style="left:677px;top:745.24px;font-size:23.45px;line-height:23.45px;color:#bfc5cf;font-family:'Liberation Mono', monospace;"><span style="color:#bfc5cf">thay đổi/xóa dữ liệu.</span></div>
<div class="t" style="left:606.36px;top:780.42px;font-size:23.45px;line-height:23.45px;color:#6b7384;font-family:'Liberation Mono', monospace;">15</div>
<div class="t" style="left:677px;top:780.42px;font-size:23.45px;line-height:23.45px;color:#bfc5cf;font-family:'Liberation Mono', monospace;"></div>
<div class="t" style="left:606.36px;top:815.60px;font-size:23.45px;line-height:23.45px;color:#6b7384;font-family:'Liberation Mono', monospace;">16</div>
<div class="t" style="left:677px;top:815.60px;font-size:23.45px;line-height:23.45px;color:#bfc5cf;font-family:'Liberation Mono', monospace;"><span style="color:#e86a73">## Cleanup Temp &amp; Debug Files</span></div>
<div class="t" style="left:606.36px;top:850.78px;font-size:23.45px;line-height:23.45px;color:#6b7384;font-family:'Liberation Mono', monospace;">17</div>
<div class="t" style="left:677px;top:850.78px;font-size:23.45px;line-height:23.45px;color:#bfc5cf;font-family:'Liberation Mono', monospace;"></div>
<div class="t" style="left:606.36px;top:885.96px;font-size:23.45px;line-height:23.45px;color:#6b7384;font-family:'Liberation Mono', monospace;">18</div>
<div class="t" style="left:677px;top:885.96px;font-size:23.45px;line-height:23.45px;color:#bfc5cf;font-family:'Liberation Mono', monospace;"><span style="color:#e86a73">### Mục đích</span></div>
<div class="t" style="left:606.36px;top:921.14px;font-size:23.45px;line-height:23.45px;color:#6b7384;font-family:'Liberation Mono', monospace;">19</div>
<div class="t" style="left:677px;top:921.14px;font-size:23.45px;line-height:23.45px;color:#bfc5cf;font-family:'Liberation Mono', monospace;"></div>
<div class="t" style="left:606.36px;top:956.32px;font-size:23.45px;line-height:23.45px;color:#6b7384;font-family:'Liberation Mono', monospace;">20</div>
<div class="t" style="left:677px;top:956.32px;font-size:23.45px;line-height:23.45px;color:#bfc5cf;font-family:'Liberation Mono', monospace;"><span style="color:#bfc5cf">AI </span><span style="color:#e2a66c">**bắt buộc**</span><span style="color:#bfc5cf"> phải dọn dẹp mọi file tạm, file debug, hoặc file</span></div>
<div class="t" style="left:677px;top:991.50px;font-size:23.45px;line-height:23.45px;color:#bfc5cf;font-family:'Liberation Mono', monospace;"><span style="color:#bfc5cf">trung gian sinh ra trong quá trình phân tích/chạy thử trước khi kết</span></div>
<div class="t" style="left:677px;top:1026.68px;font-size:23.45px;line-height:23.45px;color:#bfc5cf;font-family:'Liberation Mono', monospace;"><span style="color:#bfc5cf">thúc nhiệm vụ.</span></div>
<div class="t" style="left:606.36px;top:1061.86px;font-size:23.45px;line-height:23.45px;color:#6b7384;font-family:'Liberation Mono', monospace;">21</div>
<div class="t" style="left:677px;top:1061.86px;font-size:23.45px;line-height:23.45px;color:#bfc5cf;font-family:'Liberation Mono', monospace;"></div>
<div class="t" style="left:606.36px;top:1097.04px;font-size:23.45px;line-height:23.45px;color:#6b7384;font-family:'Liberation Mono', monospace;">22</div>
<div class="t" style="left:677px;top:1097.04px;font-size:23.45px;line-height:23.45px;color:#bfc5cf;font-family:'Liberation Mono', monospace;"><span style="color:#bfc5cf">---</span></div>
<div class="t" style="left:606.36px;top:1132.22px;font-size:23.45px;line-height:23.45px;color:#6b7384;font-family:'Liberation Mono', monospace;">23</div>
<div class="t" style="left:677px;top:1132.22px;font-size:23.45px;line-height:23.45px;color:#bfc5cf;font-family:'Liberation Mono', monospace;"></div>
<div class="t" style="left:606.36px;top:1167.40px;font-size:23.45px;line-height:23.45px;color:#6b7384;font-family:'Liberation Mono', monospace;">24</div>
<div class="t" style="left:677px;top:1167.40px;font-size:23.45px;line-height:23.45px;color:#bfc5cf;font-family:'Liberation Mono', monospace;"><span style="color:#e86a73">### Các loại file phải xóa</span></div>
<div class="t" style="left:606.36px;top:1202.58px;font-size:23.45px;line-height:23.45px;color:#6b7384;font-family:'Liberation Mono', monospace;">25</div>
<div class="t" style="left:677px;top:1202.58px;font-size:23.45px;line-height:23.45px;color:#bfc5cf;font-family:'Liberation Mono', monospace;"></div>
<div class="t" style="left:606.36px;top:1237.76px;font-size:23.45px;line-height:23.45px;color:#6b7384;font-family:'Liberation Mono', monospace;">26</div>
<div class="t" style="left:677px;top:1237.76px;font-size:23.45px;line-height:23.45px;color:#bfc5cf;font-family:'Liberation Mono', monospace;"><span style="color:#bfc5cf">| Pattern | Mô tả |</span></div>
<div class="t" style="left:606.36px;top:1272.94px;font-size:23.45px;line-height:23.45px;color:#6b7384;font-family:'Liberation Mono', monospace;">27</div>
<div class="t" style="left:677px;top:1272.94px;font-size:23.45px;line-height:23.45px;color:#bfc5cf;font-family:'Liberation Mono', monospace;"><span style="color:#bfc5cf">|---------|-------|</span></div>
<div class="t" style="left:606.36px;top:1308.12px;font-size:23.45px;line-height:23.45px;color:#6b7384;font-family:'Liberation Mono', monospace;">28</div>
<div class="t" style="left:677px;top:1308.12px;font-size:23.45px;line-height:23.45px;color:#bfc5cf;font-family:'Liberation Mono', monospace;"><span style="color:#bfc5cf">| </span><span style="color:#e2a66c">`</span><span style="color:#98c379">*_debug.txt</span><span style="color:#e2a66c">`</span><span style="color:#bfc5cf"> | File debug tạm thời (vd: </span><span style="color:#e2a66c">`</span><span style="color:#98c379">tc029_debug.txt</span><span style="color:#e2a66c">`</span><span style="color:#bfc5cf">) |</span></div>
<div class="t" style="left:606.36px;top:1343.30px;font-size:23.45px;line-height:23.45px;color:#6b7384;font-family:'Liberation Mono', monospace;">29</div>
<div class="t" style="left:677px;top:1343.30px;font-size:23.45px;line-height:23.45px;color:#bfc5cf;font-family:'Liberation Mono', monospace;"><span style="color:#bfc5cf">| </span><span style="color:#e2a66c">`</span><span style="color:#98c379">tmp_*.*</span><span style="color:#e2a66c">`</span><span style="color:#bfc5cf"> | File tạm thời trung gian khi thực thi |</span></div>
<svg class="r" style="left:1666px;top:138px;opacity:.42" width="72" height="180"><rect x="0.0" y="0.8" width="1" height="2" fill="#e86a73"/><rect x="2.0" y="0.8" width="2" height="2" fill="#e86a73"/><rect x="5.0" y="0.8" width="6" height="2" fill="#e86a73"/><rect x="12.0" y="0.8" width="4" height="2" fill="#e86a73"/><rect x="0.0" y="4.8" width="2" height="2" fill="#e86a73"/><rect x="3.0" y="4.8" width="4" height="2" fill="#e86a73"/><rect x="8.0" y="4.8" width="3" height="2" fill="#e86a73"/><rect x="0.0" y="8.8" width="1" height="2" fill="#e6c07e"/><rect x="2.0" y="8.8" width="3" height="2" fill="#bfc5cf"/><rect x="6.0" y="8.8" width="4" height="2" fill="#bfc5cf"/><rect x="11.0" y="8.8" width="4" height="2" fill="#bfc5cf"/><rect x="16.0" y="8.8" width="5" height="2" fill="#bfc5cf"/><rect x="22.0" y="8.8" width="4" height="2" fill="#bfc5cf"/><rect x="27.0" y="8.8" width="4" height="2" fill="#bfc5cf"/><rect x="32.0" y="8.8" width="2" height="2" fill="#bfc5cf"/><rect x="35.0" y="8.8" width="4" height="2" fill="#bfc5cf"/><rect x="40.0" y="8.8" width="5" height="2" fill="#bfc5cf"/><rect x="46.0" y="8.8" width="2" height="2" fill="#bfc5cf"/><rect x="49.0" y="8.8" width="5" height="2" fill="#bfc5cf"/><rect x="55.0" y="8.8" width="4" height="2" fill="#bfc5cf"/><rect x="60.0" y="8.8" width="5" height="2" fill="#bfc5cf"/><rect x="0.0" y="10.8" width="5" height="2" fill="#bfc5cf"/><rect x="0.0" y="12.8" width="1" height="2" fill="#e6c07e"/><rect x="2.0" y="12.8" width="4" height="2" fill="#bfc5cf"/><rect x="7.0" y="12.8" width="8" height="2" fill="#bfc5cf"/><rect x="16.0" y="12.8" width="2" height="2" fill="#bfc5cf"/><rect x="19.0" y="12.8" width="3" height="2" fill="#bfc5cf"/><rect x="23.0" y="12.8" width="4" height="2" fill="#bfc5cf"/><rect x="28.0" y="12.8" width="4" height="2" fill="#bfc5cf"/><rect x="33.0" y="12.8" width="5" height="2" fill="#bfc5cf"/><rect x="39.0" y="12.8" width="3" height="2" fill="#bfc5cf"/><rect x="43.0" y="12.8" width="2" height="2" fill="#bfc5cf"/><rect x="46.0" y="12.8" width="3" height="2" fill="#bfc5cf"/><rect x="50.0" y="12.8" width="3" height="2" fill="#bfc5cf"/><rect x="54.0" y="12.8" width="4" height="2" fill="#bfc5cf"/><rect x="59.0" y="12.8" width="4" height="2" fill="#bfc5cf"/><rect x="64.0" y="12.8" width="3" height="2" fill="#bfc5cf"/><rect x="0.0" y="14.8" width="1" height="2" fill="#e6c07e"/><rect x="2.0" y="14.8" width="3" height="2" fill="#bfc5cf"/><rect x="6.0" y="14.8" width="5" height="2" fill="#bfc5cf"/><rect x="12.0" y="14.8" width="4" height="2" fill="#bfc5cf"/><rect x="17.0" y="14.8" width="5" height="2" fill="#bfc5cf"/><rect x="23.0" y="14.8" width="4" height="2" fill="#bfc5cf"/><rect x="28.0" y="14.8" width="4" height="2" fill="#bfc5cf"/><rect x="33.0" y="14.8" width="4" height="2" fill="#bfc5cf"/><rect x="38.0" y="14.8" width="5" height="2" fill="#bfc5cf"/><rect x="44.0" y="14.8" width="4" height="2" fill="#bfc5cf"/><rect x="0.0" y="18.8" width="2" height="2" fill="#e86a73"/><rect x="3.0" y="18.8" width="2" height="2" fill="#e86a73"/><rect x="6.0" y="18.8" width="4" height="2" fill="#e86a73"/><rect x="11.0" y="18.8" width="2" height="2" fill="#e86a73"/><rect x="14.0" y="18.8" width="4" height="2" fill="#e86a73"/><rect x="19.0" y="18.8" width="10" height="2" fill="#e86a73"/><rect x="0.0" y="22.8" width="1" height="2" fill="#e6c07e"/><rect x="2.0" y="22.8" width="3" height="2" fill="#bfc5cf"/><rect x="6.0" y="22.8" width="2" height="2" fill="#bfc5cf"/><rect x="9.0" y="22.8" width="1" height="2" fill="#bfc5cf"/><rect x="11.0" y="22.8" width="4" height="2" fill="#bfc5cf"/><rect x="16.0" y="22.8" width="3" height="2" fill="#bfc5cf"/><rect x="20.0" y="22.8" width="3" height="2" fill="#bfc5cf"/><rect x="24.0" y="22.8" width="4" height="2" fill="#bfc5cf"/><rect x="29.0" y="22.8" width="3" height="2" fill="#bfc5cf"/><rect x="33.0" y="22.8" width="3" height="2" fill="#bfc5cf"/><rect x="37.0" y="22.8" width="5" height="2" fill="#bfc5cf"/><rect x="43.0" y="22.8" width="6" height="2" fill="#bfc5cf"/><rect x="50.0" y="22.8" width="7" height="2" fill="#bfc5cf"/><rect x="58.0" y="22.8" width="2" height="2" fill="#bfc5cf"/><rect x="61.0" y="22.8" width="4" height="2" fill="#bfc5cf"/><rect x="0.0" y="24.8" width="11" height="2" fill="#bfc5cf"/><rect x="12.0" y="24.8" width="8" height="2" fill="#bfc5cf"/><rect x="21.0" y="24.8" width="7" height="2" fill="#bfc5cf"/><rect x="29.0" y="24.8" width="2" height="2" fill="#bfc5cf"/><rect x="32.0" y="24.8" width="5" height="2" fill="#bfc5cf"/><rect x="38.0" y="24.8" width="2" height="2" fill="#bfc5cf"/><rect x="41.0" y="24.8" width="2" height="2" fill="#bfc5cf"/><rect x="44.0" y="24.8" width="4" height="2" fill="#bfc5cf"/><rect x="49.0" y="24.8" width="1" height="2" fill="#bfc5cf"/><rect x="51.0" y="24.8" width="2" height="2" fill="#bfc5cf"/><rect x="54.0" y="24.8" width="4" height="2" fill="#bfc5cf"/><rect x="59.0" y="24.8" width="2" height="2" fill="#bfc5cf"/><rect x="62.0" y="24.8" width="5" height="2" fill="#bfc5cf"/><rect x="0.0" y="26.8" width="1" height="2" fill="#e6c07e"/><rect x="2.0" y="26.8" width="3" height="2" fill="#bfc5cf"/><rect x="6.0" y="26.8" width="2" height="2" fill="#bfc5cf"/><rect x="9.0" y="26.8" width="3" height="2" fill="#bfc5cf"/><rect x="13.0" y="26.8" width="5" height="2" fill="#bfc5cf"/><rect x="19.0" y="26.8" width="3" height="2" fill="#bfc5cf"/><rect x="23.0" y="26.8" width="4" height="2" fill="#bfc5cf"/><rect x="28.0" y="26.8" width="3" height="2" fill="#bfc5cf"/><rect x="32.0" y="26.8" width="4" height="2" fill="#bfc5cf"/><rect x="37.0" y="26.8" width="5" height="2" fill="#bfc5cf"/><rect x="43.0" y="26.8" width="10" height="2" fill="#bfc5cf"/><rect x="54.0" y="26.8" width="7" height="2" fill="#bfc5cf"/><rect x="0.0" y="28.8" width="10" height="2" fill="#bfc5cf"/><rect x="11.0" y="28.8" width="8" height="2" fill="#bfc5cf"/><rect x="20.0" y="28.8" width="2" height="2" fill="#bfc5cf"/><rect x="23.0" y="28.8" width="3" height="2" fill="#bfc5cf"/><rect x="27.0" y="28.8" width="4" height="2" fill="#bfc5cf"/><rect x="32.0" y="28.8" width="5" height="2" fill="#bfc5cf"/><rect x="0.0" y="30.8" width="1" height="2" fill="#e6c07e"/><rect x="2.0" y="30.8" width="3" height="2" fill="#bfc5cf"/><rect x="6.0" y="30.8" width="6" height="2" fill="#bfc5cf"/><rect x="13.0" y="30.8" width="4" height="2" fill="#bfc5cf"/><rect x="18.0" y="30.8" width="4" height="2" fill="#bfc5cf"/><rect x="23.0" y="30.8" width="3" height="2" fill="#bfc5cf"/><rect x="27.0" y="30.8" width="4" height="2" fill="#bfc5cf"/><rect x="32.0" y="30.8" width="4" height="2" fill="#bfc5cf"/><rect x="37.0" y="30.8" width="11" height="2" fill="#bfc5cf"/><rect x="49.0" y="30.8" width="3" height="2" fill="#bfc5cf"/><rect x="53.0" y="30.8" width="11" height="2" fill="#bfc5cf"/><rect x="0.0" y="32.8" width="1" height="2" fill="#e6c07e"/><rect x="2.0" y="32.8" width="4" height="2" fill="#bfc5cf"/><rect x="7.0" y="32.8" width="4" height="2" fill="#bfc5cf"/><rect x="12.0" y="32.8" width="3" height="2" fill="#bfc5cf"/><rect x="16.0" y="32.8" width="3" height="2" fill="#bfc5cf"/><rect x="20.0" y="32.8" width="5" height="2" fill="#bfc5cf"/><rect x="26.0" y="32.8" width="3" height="2" fill="#bfc5cf"/><rect x="30.0" y="32.8" width="4" height="2" fill="#bfc5cf"/><rect x="35.0" y="32.8" width="3" height="2" fill="#bfc5cf"/><rect x="39.0" y="32.8" width="3" height="2" fill="#bfc5cf"/><rect x="43.0" y="32.8" width="2" height="2" fill="#bfc5cf"/><rect x="46.0" y="32.8" width="4" height="2" fill="#bfc5cf"/><rect x="51.0" y="32.8" width="3" height="2" fill="#bfc5cf"/><rect x="55.0" y="32.8" width="2" height="2" fill="#bfc5cf"/><rect x="58.0" y="32.8" width="3" height="2" fill="#bfc5cf"/><rect x="62.0" y="32.8" width="4" height="2" fill="#bfc5cf"/><rect x="0.0" y="34.8" width="4" height="2" fill="#bfc5cf"/><rect x="5.0" y="34.8" width="7" height="2" fill="#bfc5cf"/><rect x="13.0" y="34.8" width="2" height="2" fill="#bfc5cf"/><rect x="16.0" y="34.8" width="5" height="2" fill="#bfc5cf"/><rect x="0.0" y="38.8" width="2" height="2" fill="#e86a73"/><rect x="3.0" y="38.8" width="7" height="2" fill="#e86a73"/><rect x="11.0" y="38.8" width="4" height="2" fill="#e86a73"/><rect x="16.0" y="38.8" width="1" height="2" fill="#e86a73"/><rect x="18.0" y="38.8" width="5" height="2" fill="#e86a73"/><rect x="24.0" y="38.8" width="5" height="2" fill="#e86a73"/><rect x="0.0" y="42.8" width="3" height="2" fill="#e86a73"/><rect x="4.0" y="42.8" width="3" height="2" fill="#e86a73"/><rect x="8.0" y="42.8" width="4" height="2" fill="#e86a73"/><rect x="0.0" y="46.8" width="2" height="2" fill="#bfc5cf"/><rect x="3.0" y="46.8" width="5" height="2" fill="#e2a66c"/><rect x="9.0" y="46.8" width="6" height="2" fill="#e2a66c"/><rect x="16.0" y="46.8" width="4" height="2" fill="#bfc5cf"/><rect x="21.0" y="46.8" width="3" height="2" fill="#bfc5cf"/><rect x="25.0" y="46.8" width="3" height="2" fill="#bfc5cf"/><rect x="29.0" y="46.8" width="3" height="2" fill="#bfc5cf"/><rect x="33.0" y="46.8" width="4" height="2" fill="#bfc5cf"/><rect x="38.0" y="46.8" width="4" height="2" fill="#bfc5cf"/><rect x="43.0" y="46.8" width="4" height="2" fill="#bfc5cf"/><rect x="48.0" y="46.8" width="6" height="2" fill="#bfc5cf"/><rect x="55.0" y="46.8" width="4" height="2" fill="#bfc5cf"/><rect x="60.0" y="46.8" width="4" height="2" fill="#bfc5cf"/><rect x="0.0" y="48.8" width="5" height="2" fill="#bfc5cf"/><rect x="6.0" y="48.8" width="4" height="2" fill="#bfc5cf"/><rect x="11.0" y="48.8" width="4" height="2" fill="#bfc5cf"/><rect x="16.0" y="48.8" width="2" height="2" fill="#bfc5cf"/><rect x="19.0" y="48.8" width="5" height="2" fill="#bfc5cf"/><rect x="25.0" y="48.8" width="3" height="2" fill="#bfc5cf"/><rect x="29.0" y="48.8" width="5" height="2" fill="#bfc5cf"/><rect x="35.0" y="48.8" width="4" height="2" fill="#bfc5cf"/><rect x="40.0" y="48.8" width="9" height="2" fill="#bfc5cf"/><rect x="50.0" y="48.8" width="3" height="2" fill="#bfc5cf"/><rect x="54.0" y="48.8" width="5" height="2" fill="#bfc5cf"/><rect x="60.0" y="48.8" width="3" height="2" fill="#bfc5cf"/><rect x="64.0" y="48.8" width="3" height="2" fill="#bfc5cf"/><rect x="0.0" y="50.8" width="4" height="2" fill="#bfc5cf"/><rect x="5.0" y="50.8" width="5" height="2" fill="#bfc5cf"/><rect x="11.0" y="50.8" width="3" height="2" fill="#bfc5cf"/><rect x="0.0" y="54.8" width="3" height="2" fill="#bfc5cf"/><rect x="0.0" y="58.8" width="3" height="2" fill="#e86a73"/><rect x="4.0" y="58.8" width="3" height="2" fill="#e86a73"/><rect x="8.0" y="58.8" width="4" height="2" fill="#e86a73"/><rect x="13.0" y="58.8" width="4" height="2" fill="#e86a73"/><rect x="18.0" y="58.8" width="4" height="2" fill="#e86a73"/><rect x="23.0" y="58.8" width="3" height="2" fill="#e86a73"/><rect x="0.0" y="62.8" width="1" height="2" fill="#bfc5cf"/><rect x="2.0" y="62.8" width="7" height="2" fill="#bfc5cf"/><rect x="10.0" y="62.8" width="1" height="2" fill="#bfc5cf"/><rect x="12.0" y="62.8" width="2" height="2" fill="#bfc5cf"/><rect x="15.0" y="62.8" width="2" height="2" fill="#bfc5cf"/><rect x="18.0" y="62.8" width="1" height="2" fill="#bfc5cf"/><rect x="0.0" y="64.8" width="19" height="2" fill="#bfc5cf"/><rect x="0.0" y="66.8" width="1" height="2" fill="#bfc5cf"/><rect x="2.0" y="66.8" width="13" height="2" fill="#98c379"/><rect x="16.0" y="66.8" width="1" height="2" fill="#bfc5cf"/><rect x="18.0" y="66.8" width="4" height="2" fill="#bfc5cf"/><rect x="23.0" y="66.8" width="5" height="2" fill="#bfc5cf"/><rect x="29.0" y="66.8" width="3" height="2" fill="#bfc5cf"/><rect x="33.0" y="66.8" width="4" height="2" fill="#bfc5cf"/><rect x="38.0" y="66.8" width="4" height="2" fill="#bfc5cf"/><rect x="43.0" y="66.8" width="17" height="2" fill="#98c379"/><rect x="60.0" y="66.8" width="1" height="2" fill="#bfc5cf"/><rect x="62.0" y="66.8" width="1" height="2" fill="#bfc5cf"/><rect x="0.0" y="68.8" width="1" height="2" fill="#bfc5cf"/><rect x="2.0" y="68.8" width="13" height="2" fill="#98c379"/><rect x="16.0" y="68.8" width="1" height="2" fill="#bfc5cf"/><rect x="18.0" y="68.8" width="11" height="2" fill="#98c379"/><rect x="30.0" y="68.8" width="1" height="2" fill="#bfc5cf"/><rect x="32.0" y="68.8" width="4" height="2" fill="#bfc5cf"/><rect x="37.0" y="68.8" width="5" height="2" fill="#bfc5cf"/><rect x="43.0" y="68.8" width="3" height="2" fill="#bfc5cf"/><rect x="47.0" y="68.8" width="4" height="2" fill="#bfc5cf"/><rect x="52.0" y="68.8" width="1" height="2" fill="#bfc5cf"/><rect x="0.0" y="70.8" width="1" height="2" fill="#bfc5cf"/><rect x="2.0" y="70.8" width="10" height="2" fill="#98c379"/><rect x="13.0" y="70.8" width="1" height="2" fill="#bfc5cf"/><rect x="15.0" y="70.8" width="4" height="2" fill="#bfc5cf"/><rect x="20.0" y="70.8" width="3" height="2" fill="#bfc5cf"/><rect x="24.0" y="70.8" width="1" height="2" fill="#bfc5cf"/><rect x="26.0" y="70.8" width="2" height="2" fill="#bfc5cf"/><rect x="29.0" y="70.8" width="5" height="2" fill="#bfc5cf"/><rect x="35.0" y="70.8" width="1" height="2" fill="#bfc5cf"/><rect x="0.0" y="72.8" width="1" height="2" fill="#bfc5cf"/><rect x="2.0" y="72.8" width="12" height="2" fill="#98c379"/><rect x="15.0" y="72.8" width="1" height="2" fill="#bfc5cf"/><rect x="17.0" y="72.8" width="11" height="2" fill="#98c379"/><rect x="29.0" y="72.8" width="1" height="2" fill="#bfc5cf"/><rect x="31.0" y="72.8" width="6" height="2" fill="#bfc5cf"/><rect x="38.0" y="72.8" width="3" height="2" fill="#bfc5cf"/><rect x="42.0" y="72.8" width="4" height="2" fill="#bfc5cf"/><rect x="47.0" y="72.8" width="4" height="2" fill="#bfc5cf"/><rect x="52.0" y="72.8" width="3" height="2" fill="#bfc5cf"/><rect x="56.0" y="72.8" width="1" height="2" fill="#bfc5cf"/><rect x="0.0" y="74.8" width="1" height="2" fill="#bfc5cf"/><rect x="2.0" y="74.8" width="7" height="2" fill="#98c379"/><rect x="10.0" y="74.8" width="1" height="2" fill="#bfc5cf"/><rect x="12.0" y="74.8" width="8" height="2" fill="#98c379"/><rect x="21.0" y="74.8" width="1" height="2" fill="#bfc5cf"/><rect x="23.0" y="74.8" width="4" height="2" fill="#bfc5cf"/><rect x="28.0" y="74.8" width="6" height="2" fill="#bfc5cf"/><rect x="35.0" y="74.8" width="3" height="2" fill="#bfc5cf"/><rect x="39.0" y="74.8" width="1" height="2" fill="#bfc5cf"/><rect x="0.0" y="76.8" width="1" height="2" fill="#bfc5cf"/><rect x="2.0" y="76.8" width="18" height="2" fill="#98c379"/><rect x="21.0" y="76.8" width="1" height="2" fill="#bfc5cf"/><rect x="23.0" y="76.8" width="7" height="2" fill="#98c379"/><rect x="31.0" y="76.8" width="1" height="2" fill="#bfc5cf"/><rect x="33.0" y="76.8" width="3" height="2" fill="#bfc5cf"/><rect x="37.0" y="76.8" width="12" height="2" fill="#bfc5cf"/><rect x="50.0" y="76.8" width="3" height="2" fill="#bfc5cf"/><rect x="54.0" y="76.8" width="1" height="2" fill="#bfc5cf"/><rect x="0.0" y="78.8" width="1" height="2" fill="#bfc5cf"/><rect x="2.0" y="78.8" width="20" height="2" fill="#98c379"/><rect x="23.0" y="78.8" width="1" height="2" fill="#bfc5cf"/><rect x="25.0" y="78.8" width="4" height="2" fill="#98c379"/><rect x="30.0" y="78.8" width="1" height="2" fill="#bfc5cf"/><rect x="32.0" y="78.8" width="3" height="2" fill="#bfc5cf"/><rect x="36.0" y="78.8" width="3" height="2" fill="#bfc5cf"/><rect x="40.0" y="78.8" width="3" height="2" fill="#bfc5cf"/><rect x="44.0" y="78.8" width="3" height="2" fill="#bfc5cf"/><rect x="48.0" y="78.8" width="1" height="2" fill="#bfc5cf"/><rect x="0.0" y="80.8" width="1" height="2" fill="#bfc5cf"/><rect x="2.0" y="80.8" width="4" height="2" fill="#bfc5cf"/><rect x="7.0" y="80.8" width="6" height="2" fill="#98c379"/><rect x="14.0" y="80.8" width="3" height="2" fill="#bfc5cf"/><rect x="18.0" y="80.8" width="3" height="2" fill="#bfc5cf"/><rect x="22.0" y="80.8" width="1" height="2" fill="#bfc5cf"/><rect x="24.0" y="80.8" width="5" height="2" fill="#98c379"/><rect x="30.0" y="80.8" width="1" height="2" fill="#bfc5cf"/><rect x="32.0" y="80.8" width="7" height="2" fill="#98c379"/><rect x="40.0" y="80.8" width="1" height="2" fill="#bfc5cf"/><rect x="42.0" y="80.8" width="8" height="2" fill="#98c379"/><rect x="51.0" y="80.8" width="1" height="2" fill="#bfc5cf"/><rect x="53.0" y="80.8" width="4" height="2" fill="#bfc5cf"/><rect x="0.0" y="82.8" width="3" height="2" fill="#bfc5cf"/><rect x="4.0" y="82.8" width="3" height="2" fill="#bfc5cf"/><rect x="8.0" y="82.8" width="1" height="2" fill="#bfc5cf"/><rect x="0.0" y="86.8" width="3" height="2" fill="#bfc5cf"/><rect x="0.0" y="90.8" width="3" height="2" fill="#e86a73"/><rect x="4.0" y="90.8" width="3" height="2" fill="#e86a73"/><rect x="8.0" y="90.8" width="3" height="2" fill="#e86a73"/><rect x="12.0" y="90.8" width="4" height="2" fill="#e86a73"/><rect x="17.0" y="90.8" width="3" height="2" fill="#e86a73"/><rect x="21.0" y="90.8" width="3" height="2" fill="#e86a73"/><rect x="0.0" y="94.8" width="2" height="2" fill="#e2a66c"/><rect x="3.0" y="94.8" width="11" height="2" fill="#e2a66c"/><rect x="15.0" y="94.8" width="3" height="2" fill="#bfc5cf"/><rect x="19.0" y="94.8" width="3" height="2" fill="#bfc5cf"/><rect x="23.0" y="94.8" width="3" height="2" fill="#bfc5cf"/><rect x="27.0" y="94.8" width="9" height="2" fill="#bfc5cf"/><rect x="37.0" y="94.8" width="1" height="2" fill="#bfc5cf"/><rect x="40.0" y="94.8" width="3" height="2" fill="#bfc5cf"/><rect x="44.0" y="94.8" width="3" height="2" fill="#bfc5cf"/><rect x="48.0" y="94.8" width="3" height="2" fill="#bfc5cf"/><rect x="52.0" y="94.8" width="3" height="2" fill="#bfc5cf"/><rect x="56.0" y="94.8" width="3" height="2" fill="#bfc5cf"/><rect x="60.0" y="94.8" width="1" height="2" fill="#bfc5cf"/><rect x="62.0" y="94.8" width="3" height="2" fill="#bfc5cf"/><rect x="66.0" y="94.8" width="4" height="2" fill="#bfc5cf"/><rect x="0.0" y="96.8" width="5" height="2" fill="#bfc5cf"/><rect x="6.0" y="96.8" width="5" height="2" fill="#bfc5cf"/><rect x="12.0" y="96.8" width="3" height="2" fill="#bfc5cf"/><rect x="16.0" y="96.8" width="4" height="2" fill="#bfc5cf"/><rect x="0.0" y="98.8" width="2" height="2" fill="#e2a66c"/><rect x="3.0" y="98.8" width="10" height="2" fill="#e2a66c"/><rect x="14.0" y="98.8" width="3" height="2" fill="#bfc5cf"/><rect x="18.0" y="98.8" width="2" height="2" fill="#bfc5cf"/><rect x="21.0" y="98.8" width="4" height="2" fill="#bfc5cf"/><rect x="26.0" y="98.8" width="3" height="2" fill="#bfc5cf"/><rect x="30.0" y="98.8" width="4" height="2" fill="#bfc5cf"/><rect x="35.0" y="98.8" width="1" height="2" fill="#bfc5cf"/><rect x="38.0" y="98.8" width="3" height="2" fill="#bfc5cf"/><rect x="42.0" y="98.8" width="4" height="2" fill="#bfc5cf"/><rect x="47.0" y="98.8" width="1" height="2" fill="#bfc5cf"/><rect x="50.0" y="98.8" width="5" height="2" fill="#bfc5cf"/><rect x="56.0" y="98.8" width="4" height="2" fill="#bfc5cf"/><rect x="0.0" y="100.8" width="10" height="2" fill="#bfc5cf"/><rect x="0.0" y="102.8" width="2" height="2" fill="#e2a66c"/><rect x="3.0" y="102.8" width="5" height="2" fill="#e2a66c"/><rect x="9.0" y="102.8" width="6" height="2" fill="#e2a66c"/><rect x="16.0" y="102.8" width="4" height="2" fill="#bfc5cf"/><rect x="21.0" y="102.8" width="3" height="2" fill="#bfc5cf"/><rect x="25.0" y="102.8" width="4" height="2" fill="#bfc5cf"/><rect x="30.0" y="102.8" width="2" height="2" fill="#bfc5cf"/><rect x="33.0" y="102.8" width="3" height="2" fill="#bfc5cf"/><rect x="37.0" y="102.8" width="5" height="2" fill="#bfc5cf"/><rect x="43.0" y="102.8" width="4" height="2" fill="#bfc5cf"/><rect x="48.0" y="102.8" width="3" height="2" fill="#bfc5cf"/><rect x="52.0" y="102.8" width="3" height="2" fill="#bfc5cf"/><rect x="56.0" y="102.8" width="3" height="2" fill="#bfc5cf"/><rect x="60.0" y="102.8" width="4" height="2" fill="#bfc5cf"/><rect x="0.0" y="106.8" width="3" height="2" fill="#bfc5cf"/><rect x="0.0" y="110.8" width="3" height="2" fill="#e86a73"/><rect x="4.0" y="110.8" width="4" height="2" fill="#e86a73"/><rect x="9.0" y="110.8" width="4" height="2" fill="#e86a73"/><rect x="14.0" y="110.8" width="4" height="2" fill="#e86a73"/><rect x="0.0" y="114.8" width="1" height="2" fill="#e2a66c"/><rect x="2.0" y="114.8" width="22" height="2" fill="#98c379"/><rect x="25.0" y="114.8" width="1" height="2" fill="#bfc5cf"/><rect x="27.0" y="114.8" width="20" height="2" fill="#98c379"/><rect x="48.0" y="114.8" width="1" height="2" fill="#bfc5cf"/><rect x="50.0" y="114.8" width="3" height="2" fill="#bfc5cf"/><rect x="54.0" y="114.8" width="3" height="2" fill="#bfc5cf"/><rect x="58.0" y="114.8" width="4" height="2" fill="#bfc5cf"/><rect x="63.0" y="114.8" width="5" height="2" fill="#bfc5cf"/><rect x="0.0" y="116.8" width="5" height="2" fill="#bfc5cf"/><rect x="6.0" y="116.8" width="2" height="2" fill="#bfc5cf"/><rect x="9.0" y="116.8" width="10" height="2" fill="#bfc5cf"/><rect x="20.0" y="116.8" width="5" height="2" fill="#bfc5cf"/><rect x="26.0" y="116.8" width="1" height="2" fill="#bfc5cf"/><rect x="0.0" y="118.8" width="1" height="2" fill="#e2a66c"/><rect x="2.0" y="118.8" width="7" height="2" fill="#98c379"/><rect x="10.0" y="118.8" width="1" height="2" fill="#bfc5cf"/><rect x="12.0" y="118.8" width="4" height="2" fill="#bfc5cf"/><rect x="17.0" y="118.8" width="3" height="2" fill="#bfc5cf"/><rect x="21.0" y="118.8" width="3" height="2" fill="#bfc5cf"/><rect x="25.0" y="118.8" width="2" height="2" fill="#bfc5cf"/><rect x="28.0" y="118.8" width="3" height="2" fill="#bfc5cf"/><rect x="32.0" y="118.8" width="1" height="2" fill="#bfc5cf"/><rect x="34.0" y="118.8" width="1" height="2" fill="#bfc5cf"/><rect x="36.0" y="118.8" width="1" height="2" fill="#bfc5cf"/><rect x="38.0" y="118.8" width="2" height="2" fill="#bfc5cf"/><rect x="41.0" y="118.8" width="1" height="2" fill="#bfc5cf"/><rect x="0.0" y="120.8" width="1" height="2" fill="#e2a66c"/><rect x="2.0" y="120.8" width="12" height="2" fill="#98c379"/><rect x="15.0" y="120.8" width="1" height="2" fill="#bfc5cf"/><rect x="17.0" y="120.8" width="11" height="2" fill="#bfc5cf"/><rect x="29.0" y="120.8" width="2" height="2" fill="#bfc5cf"/><rect x="32.0" y="120.8" width="5" height="2" fill="#bfc5cf"/><rect x="38.0" y="120.8" width="2" height="2" fill="#bfc5cf"/><rect x="41.0" y="120.8" width="4" height="2" fill="#bfc5cf"/><rect x="0.0" y="122.8" width="1" height="2" fill="#e2a66c"/><rect x="2.0" y="122.8" width="10" height="2" fill="#98c379"/><rect x="13.0" y="122.8" width="1" height="2" fill="#bfc5cf"/><rect x="15.0" y="122.8" width="3" height="2" fill="#bfc5cf"/><rect x="19.0" y="122.8" width="8" height="2" fill="#98c379"/><rect x="28.0" y="122.8" width="1" height="2" fill="#bfc5cf"/><rect x="30.0" y="122.8" width="10" height="2" fill="#98c379"/><rect x="41.0" y="122.8" width="1" height="2" fill="#bfc5cf"/><rect x="43.0" y="122.8" width="3" height="2" fill="#bfc5cf"/><rect x="47.0" y="122.8" width="3" height="2" fill="#bfc5cf"/><rect x="51.0" y="122.8" width="2" height="2" fill="#bfc5cf"/><rect x="54.0" y="122.8" width="5" height="2" fill="#bfc5cf"/><rect x="0.0" y="124.8" width="1" height="2" fill="#e2a66c"/><rect x="2.0" y="124.8" width="9" height="2" fill="#98c379"/><rect x="12.0" y="124.8" width="1" height="2" fill="#bfc5cf"/><rect x="14.0" y="124.8" width="8" height="2" fill="#bfc5cf"/><rect x="23.0" y="124.8" width="1" height="2" fill="#bfc5cf"/><rect x="25.0" y="124.8" width="12" height="2" fill="#98c379"/><rect x="38.0" y="124.8" width="1" height="2" fill="#bfc5cf"/><rect x="40.0" y="124.8" width="10" height="2" fill="#98c379"/><rect x="51.0" y="124.8" width="1" height="2" fill="#bfc5cf"/><rect x="53.0" y="124.8" width="3" height="2" fill="#bfc5cf"/><rect x="0.0" y="126.8" width="1" height="2" fill="#bfc5cf"/><rect x="2.0" y="126.8" width="3" height="2" fill="#bfc5cf"/><rect x="6.0" y="126.8" width="2" height="2" fill="#bfc5cf"/><rect x="9.0" y="126.8" width="2" height="2" fill="#bfc5cf"/><rect x="0.0" y="128.8" width="1" height="2" fill="#bfc5cf"/><rect x="2.0" y="128.8" width="3" height="2" fill="#bfc5cf"/><rect x="6.0" y="128.8" width="2" height="2" fill="#bfc5cf"/><rect x="9.0" y="128.8" width="4" height="2" fill="#bfc5cf"/><rect x="14.0" y="128.8" width="1" height="2" fill="#bfc5cf"/><rect x="16.0" y="128.8" width="1" height="2" fill="#bfc5cf"/><rect x="18.0" y="128.8" width="5" height="2" fill="#bfc5cf"/><rect x="24.0" y="128.8" width="3" height="2" fill="#bfc5cf"/><rect x="28.0" y="128.8" width="3" height="2" fill="#bfc5cf"/><rect x="32.0" y="128.8" width="3" height="2" fill="#bfc5cf"/><rect x="36.0" y="128.8" width="3" height="2" fill="#bfc5cf"/><rect x="40.0" y="128.8" width="4" height="2" fill="#bfc5cf"/><rect x="45.0" y="128.8" width="3" height="2" fill="#bfc5cf"/><rect x="49.0" y="128.8" width="5" height="2" fill="#bfc5cf"/><rect x="0.0" y="132.8" width="3" height="2" fill="#bfc5cf"/><rect x="0.0" y="136.8" width="3" height="2" fill="#e86a73"/><rect x="4.0" y="136.8" width="3" height="2" fill="#e86a73"/><rect x="8.0" y="136.8" width="1" height="2" fill="#e86a73"/><rect x="10.0" y="136.8" width="4" height="2" fill="#e86a73"/><rect x="15.0" y="136.8" width="5" height="2" fill="#e86a73"/><rect x="0.0" y="140.8" width="2" height="2" fill="#e2a66c"/><rect x="3.0" y="140.8" width="7" height="2" fill="#e2a66c"/><rect x="11.0" y="140.8" width="4" height="2" fill="#e2a66c"/><rect x="16.0" y="140.8" width="2" height="2" fill="#e2a66c"/><rect x="19.0" y="140.8" width="5" height="2" fill="#e2a66c"/><rect x="25.0" y="140.8" width="3" height="2" fill="#e2a66c"/><rect x="29.0" y="140.8" width="2" height="2" fill="#e2a66c"/><rect x="32.0" y="140.8" width="2" height="2" fill="#e2a66c"/><rect x="35.0" y="140.8" width="9" height="2" fill="#e2a66c"/><rect x="45.0" y="140.8" width="11" height="2" fill="#bfc5cf"/><rect x="57.0" y="140.8" width="7" height="2" fill="#bfc5cf"/><rect x="65.0" y="140.8" width="7" height="2" fill="#bfc5cf"/><rect x="0.0" y="142.8" width="5" height="2" fill="#bfc5cf"/><rect x="6.0" y="142.8" width="5" height="2" fill="#bfc5cf"/><rect x="12.0" y="142.8" width="5" height="2" fill="#bfc5cf"/><rect x="18.0" y="142.8" width="4" height="2" fill="#bfc5cf"/><rect x="23.0" y="142.8" width="1" height="2" fill="#bfc5cf"/><rect x="25.0" y="142.8" width="1" height="2" fill="#bfc5cf"/><rect x="27.0" y="142.8" width="7" height="2" fill="#98c379"/><rect x="35.0" y="142.8" width="1" height="2" fill="#bfc5cf"/><rect x="37.0" y="142.8" width="11" height="2" fill="#e2a66c"/><rect x="49.0" y="142.8" width="2" height="2" fill="#bfc5cf"/><rect x="52.0" y="142.8" width="1" height="2" fill="#bfc5cf"/><rect x="54.0" y="142.8" width="1" height="2" fill="#bfc5cf"/><rect x="56.0" y="142.8" width="1" height="2" fill="#bfc5cf"/><rect x="58.0" y="142.8" width="1" height="2" fill="#bfc5cf"/><rect x="60.0" y="142.8" width="3" height="2" fill="#bfc5cf"/><rect x="64.0" y="142.8" width="3" height="2" fill="#bfc5cf"/><rect x="68.0" y="142.8" width="3" height="2" fill="#bfc5cf"/><rect x="72.0" y="142.8" width="2" height="2" fill="#bfc5cf"/><rect x="0.0" y="144.8" width="2" height="2" fill="#bfc5cf"/><rect x="0.0" y="146.8" width="2" height="2" fill="#e2a66c"/><rect x="3.0" y="146.8" width="6" height="2" fill="#e2a66c"/><rect x="10.0" y="146.8" width="5" height="2" fill="#e2a66c"/><rect x="16.0" y="146.8" width="8" height="2" fill="#e2a66c"/><rect x="25.0" y="146.8" width="4" height="2" fill="#bfc5cf"/><rect x="30.0" y="146.8" width="2" height="2" fill="#bfc5cf"/><rect x="33.0" y="146.8" width="4" height="2" fill="#bfc5cf"/><rect x="38.0" y="146.8" width="3" height="2" fill="#bfc5cf"/><rect x="42.0" y="146.8" width="4" height="2" fill="#bfc5cf"/><rect x="47.0" y="146.8" width="6" height="2" fill="#bfc5cf"/><rect x="54.0" y="146.8" width="3" height="2" fill="#bfc5cf"/><rect x="58.0" y="146.8" width="5" height="2" fill="#bfc5cf"/><rect x="64.0" y="146.8" width="5" height="2" fill="#bfc5cf"/><rect x="0.0" y="148.8" width="4" height="2" fill="#bfc5cf"/><rect x="5.0" y="148.8" width="4" height="2" fill="#bfc5cf"/><rect x="0.0" y="150.8" width="2" height="2" fill="#e2a66c"/><rect x="3.0" y="150.8" width="8" height="2" fill="#e2a66c"/><rect x="12.0" y="150.8" width="4" height="2" fill="#e2a66c"/><rect x="17.0" y="150.8" width="7" height="2" fill="#e2a66c"/><rect x="25.0" y="150.8" width="4" height="2" fill="#bfc5cf"/><rect x="30.0" y="150.8" width="3" height="2" fill="#bfc5cf"/><rect x="34.0" y="150.8" width="5" height="2" fill="#bfc5cf"/><rect x="40.0" y="150.8" width="2" height="2" fill="#bfc5cf"/><rect x="43.0" y="150.8" width="3" height="2" fill="#bfc5cf"/><rect x="47.0" y="150.8" width="2" height="2" fill="#bfc5cf"/><rect x="50.0" y="150.8" width="3" height="2" fill="#bfc5cf"/><rect x="54.0" y="150.8" width="2" height="2" fill="#bfc5cf"/><rect x="57.0" y="150.8" width="6" height="2" fill="#bfc5cf"/><rect x="0.0" y="152.8" width="2" height="2" fill="#e2a66c"/><rect x="3.0" y="152.8" width="7" height="2" fill="#e2a66c"/><rect x="11.0" y="152.8" width="3" height="2" fill="#e2a66c"/><rect x="15.0" y="152.8" width="5" height="2" fill="#e2a66c"/><rect x="21.0" y="152.8" width="6" height="2" fill="#e2a66c"/><rect x="28.0" y="152.8" width="4" height="2" fill="#bfc5cf"/><rect x="33.0" y="152.8" width="5" height="2" fill="#bfc5cf"/><rect x="39.0" y="152.8" width="2" height="2" fill="#bfc5cf"/><rect x="42.0" y="152.8" width="1" height="2" fill="#bfc5cf"/><rect x="44.0" y="152.8" width="3" height="2" fill="#bfc5cf"/><rect x="48.0" y="152.8" width="7" height="2" fill="#bfc5cf"/><rect x="56.0" y="152.8" width="2" height="2" fill="#bfc5cf"/><rect x="59.0" y="152.8" width="1" height="2" fill="#bfc5cf"/><rect x="61.0" y="152.8" width="2" height="2" fill="#bfc5cf"/><rect x="0.0" y="156.8" width="3" height="2" fill="#bfc5cf"/><rect x="0.0" y="160.8" width="3" height="2" fill="#e86a73"/><rect x="4.0" y="160.8" width="1" height="2" fill="#e86a73"/><rect x="6.0" y="160.8" width="2" height="2" fill="#e86a73"/><rect x="9.0" y="160.8" width="2" height="2" fill="#e86a73"/><rect x="12.0" y="160.8" width="2" height="2" fill="#e86a73"/><rect x="15.0" y="160.8" width="7" height="2" fill="#e86a73"/><rect x="23.0" y="160.8" width="3" height="2" fill="#e86a73"/><rect x="27.0" y="160.8" width="5" height="2" fill="#e86a73"/><rect x="33.0" y="160.8" width="2" height="2" fill="#e86a73"/><rect x="0.0" y="164.8" width="3" height="2" fill="#55595f"/><rect x="0.0" y="166.8" width="2" height="2" fill="#bfc5cf"/><rect x="3.0" y="166.8" width="7" height="2" fill="#bfc5cf"/><rect x="11.0" y="166.8" width="8" height="2" fill="#bfc5cf"/><rect x="0.0" y="168.8" width="1" height="2" fill="#bfc5cf"/><rect x="2.0" y="168.8" width="3" height="2" fill="#bfc5cf"/><rect x="6.0" y="168.8" width="3" height="2" fill="#bfc5cf"/><rect x="10.0" y="168.8" width="35" height="2" fill="#bfc5cf"/><rect x="46.0" y="168.8" width="4" height="2" fill="#bfc5cf"/><rect x="51.0" y="168.8" width="3" height="2" fill="#bfc5cf"/><rect x="0.0" y="170.8" width="1" height="2" fill="#bfc5cf"/><rect x="2.0" y="170.8" width="3" height="2" fill="#bfc5cf"/><rect x="6.0" y="170.8" width="3" height="2" fill="#bfc5cf"/><rect x="10.0" y="170.8" width="35" height="2" fill="#bfc5cf"/><rect x="46.0" y="170.8" width="4" height="2" fill="#bfc5cf"/><rect x="51.0" y="170.8" width="3" height="2" fill="#bfc5cf"/><rect x="0.0" y="172.8" width="1" height="2" fill="#bfc5cf"/><rect x="2.0" y="172.8" width="10" height="2" fill="#bfc5cf"/><rect x="13.0" y="172.8" width="5" height="2" fill="#bfc5cf"/><rect x="19.0" y="172.8" width="4" height="2" fill="#bfc5cf"/><rect x="24.0" y="172.8" width="1" height="2" fill="#bfc5cf"/><rect x="26.0" y="172.8" width="2" height="2" fill="#bfc5cf"/><rect x="29.0" y="172.8" width="7" height="2" fill="#bfc5cf"/></svg>
<div class="r" style="left:1739px;top:139px;width:1px;height:1207px;background:#2a2d34;"></div>
<div class="r" style="left:1740px;top:147px;width:22px;height:3px;background:#3f7bd6;"></div>
<div class="r" style="left:1762px;top:56px;width:1px;height:1290px;background:#2b2e35;"></div>
<svg class="r" style="left:1775px;top:72px;" width="18" height="16" viewBox="0 0 18 16"><path d="M8 1.5L1.5 8L8 14.5M1.5 8H17" fill="none" stroke="#d0d2d6" stroke-width="1.6"/></svg>
<div class="t" style="transform:scaleX(0.9573);left:1802px;top:71.25px;font-size:18.3px;line-height:18.3px;color:#d0d2d6;font-family:'Liberation Sans', sans-serif;">Back to Agent</div>
<svg class="r" style="left:2406px;top:71px;" width="20" height="19" viewBox="0 0 20 19"><path d="M10 1V18M1 9.5H19" stroke="#d0d2d6" stroke-width="1.7"/></svg>
<svg class="r" style="left:2443px;top:68px;" width="25" height="24" viewBox="0 0 25 24"><path d="M3.5 6.5A9.5 9.5 0 1 1 3 13" fill="none" stroke="#d0d2d6" stroke-width="1.7"/><path d="M2.5 2V7.5H8" fill="none" stroke="#d0d2d6" stroke-width="1.7"/><path d="M13 6.5V12.5L16.5 15" fill="none" stroke="#d0d2d6" stroke-width="1.7"/></svg>
<div class="r" style="left:2484.5px;top:78px;width:3.2px;height:3.2px;background:#d0d2d6;border-radius:50%;"></div>
<div class="r" style="left:2491.7px;top:78px;width:3.2px;height:3.2px;background:#d0d2d6;border-radius:50%;"></div>
<div class="r" style="left:2498.9px;top:78px;width:3.2px;height:3.2px;background:#d0d2d6;border-radius:50%;"></div>
<svg class="r" style="left:2523px;top:72px;" width="17" height="17" viewBox="0 0 17 17"><path d="M1.5 1.5L15.5 15.5M15.5 1.5L1.5 15.5" stroke="#d0d2d6" stroke-width="1.6"/></svg>
<div class="r" style="left:1763px;top:103px;width:797px;height:1px;background:#262930;"></div>
<div class="t" style="transform:scaleX(0.9737);left:1788.8px;top:121.08px;font-size:24.5px;line-height:24.5px;color:#d6d6d6;font-family:'Liberation Sans', sans-serif;font-weight:700;">Customizations</div>
<div class="t" style="transform:scaleX(0.9778);left:1788.8px;top:173.18px;font-size:21.2px;line-height:21.2px;color:#8e8e8e;font-family:'Liberation Sans', sans-serif;">Customize Agent to get a better, more personalized experience. </div>
<div class="t" style="transform:scaleX(0.9561);left:2378.4px;top:173.18px;font-size:21.2px;line-height:21.2px;color:#8e8e8e;font-family:'Liberation Sans', sans-serif;text-decoration:underline;text-underline-offset:3px;">Learn more</div>
<div class="t" style="left:2482px;top:173.18px;font-size:21.2px;line-height:21.2px;color:#8e8e8e;font-family:'Liberation Sans', sans-serif;">.</div>
<div class="t" style="transform:scaleX(0.8282);left:1789px;top:220.72px;font-size:21.5px;line-height:21.5px;color:#d8d8d8;font-family:'Liberation Sans', sans-serif;font-weight:700;">Rules</div>
<div class="t" style="transform:scaleX(0.9233);left:1890.3px;top:220.72px;font-size:21.5px;line-height:21.5px;color:#8a8a8a;font-family:'Liberation Sans', sans-serif;font-weight:700;">Workflows</div>
<div class="r" style="left:1763px;top:252px;width:797px;height:1.2px;background:#2c2f36;"></div>
<div class="r" style="left:1763px;top:250px;width:101px;height:4px;background:#a5a5a5;"></div>
<div class="t" style="transform:scaleX(0.8498);left:1789.4px;top:285.15px;font-size:21px;line-height:21px;color:#d8d8d8;font-family:'Liberation Sans', sans-serif;font-weight:700;">Rules</div>
<svg class="r" style="left:1848px;top:284px;" width="22" height="21" viewBox="0 0 22 21"><path d="M3.5 8.5A7.8 7.8 0 0 1 17.5 6.5M18.5 12.5A7.8 7.8 0 0 1 4.5 14.5" fill="none" stroke="#8a8a8a" stroke-width="1.5"/><path d="M18.5 2V7H13.5M3.5 19V14H8.5" fill="none" stroke="#8a8a8a" stroke-width="1.5"/></svg>
<div class="r" style="left:2388px;top:278px;width:146px;height:34px;background:#2a2d34;border-radius:4px;"></div>
<svg class="r" style="left:2399px;top:285px;" width="17" height="18" viewBox="0 0 17 18"><path d="M8.5 2V16.5M1.5 9.2H15.5" stroke="#d0d0d0" stroke-width="1.7"/></svg>
<div class="t" style="transform:scaleX(0.9555);left:2424px;top:285.15px;font-size:21px;line-height:21px;color:#d6d6d6;font-family:'Liberation Sans', sans-serif;">Workspace</div>
<div class="t" style="transform:scaleX(0.9885);left:1789px;top:329.15px;font-size:21px;line-height:21px;color:#7b7b7b;font-family:'Liberation Sans', sans-serif;">Rules help guide the behavior of Agent.</div>
<div class="r" style="left:1788px;top:365px;width:746px;height:256px;border:1px solid #2b2e35;border-radius:8px;box-sizing:border-box;"></div>
<div class="r" style="left:1789px;top:450px;width:744px;height:1px;background:#2b2e35;"></div>
<div class="r" style="left:1789px;top:535px;width:744px;height:1px;background:#2b2e35;"></div>
<div class="t" style="left:1802.5px;top:384.32px;font-size:20.8px;line-height:20.8px;color:#d4d4d4;font-family:'Liberation Sans', sans-serif;">#</div>
<svg class="r" style="left:1823.5px;top:384.5px;" width="20" height="22" viewBox="0 0 20 22"><g transform="scale(0.9)"><path d="M20.5 1.5L11 14" stroke="#9c5a4e" stroke-width="2.2" stroke-linecap="round"/><path d="M9.5 12.5L13.5 15.5L11.5 21.5Q8 23 3 22.5Q5.5 17 9.5 12.5Z" fill="#f29b38"/><path d="M9.2 14.6L12.6 17" stroke="#e0503a" stroke-width="1.3"/><path d="M8 16.8L11.8 19.2" stroke="#e0503a" stroke-width="1.1"/></g></svg>
<div class="t" style="transform:scaleX(0.9982);left:1854.4px;top:384.32px;font-size:20.8px;line-height:20.8px;color:#d4d4d4;font-family:'Liberation Sans', sans-serif;">Global Rule ## Ngôn ngữ - Mặc định giao tiếp, phân tích và giải thích ...</div>
<div class="t" style="transform:scaleX(0.9415);left:1802.5px;top:415.33px;font-size:18.2px;line-height:18.2px;color:#7f7f7f;font-family:'Liberation Sans', sans-serif;">Global</div>
<div class="t" style="transform:scaleX(0.9181);left:1802.5px;top:469.12px;font-size:20.8px;line-height:20.8px;color:#d4d4d4;font-family:'Liberation Sans', sans-serif;"># PROJECT RULES: E-COMMERCE AUTOMATION (WEB) 1. **Tech Stack:** - Fr...</div>
<div class="t" style="transform:scaleX(0.9239);left:1802.5px;top:500.03px;font-size:18.2px;line-height:18.2px;color:#7f7f7f;font-family:'Liberation Sans', sans-serif;">Project · GEMINI.md</div>
<div class="t" style="transform:scaleX(0.9527);left:1802.5px;top:554.72px;font-size:20.8px;line-height:20.8px;color:#d4d4d4;font-family:'Liberation Sans', sans-serif;"># MANUAL TESTING RULES **Luật này áp dụng BẮT BUỘC cho mọi tác vụ si...</div>
<div class="t" style="transform:scaleX(0.9348);left:1802.5px;top:584.93px;font-size:18.2px;line-height:18.2px;color:#7f7f7f;font-family:'Liberation Sans', sans-serif;">Project · manual_testing_rules.md</div>
<div class="r" style="left:0px;top:1346px;width:2560px;height:34px;background:#171a1e;"></div>
<div class="r" style="left:0px;top:1346px;width:62px;height:34px;background:#4d78cc;"></div>
<svg class="r" style="left:26px;top:1348px;" width="22" height="27" viewBox="0 0 22 27"><path d="M3 9.5L10.5 16.5L3 23.5M19.5 3L12 10.5L19.5 17.5" fill="none" stroke="#ffffff" stroke-width="1.8"/></svg>
<svg class="r" style="left:76px;top:1350px;" width="25" height="25" viewBox="0 0 25 25"><circle cx="12.4" cy="12" r="10.6" fill="none" stroke="#a9aeb6" stroke-width="1.7"/><path d="M8 7.6L16.8 16.4M16.8 7.6L8 16.4" stroke="#a9aeb6" stroke-width="1.7"/></svg>
<div class="t" style="left:106.3px;top:1355.10px;font-size:18px;line-height:18px;color:#a9aeb6;font-family:'Liberation Sans', sans-serif;">0</div>
<svg class="r" style="left:122px;top:1349px;" width="26" height="24" viewBox="0 0 26 24"><path d="M12.5 2L24 22H1Z" fill="none" stroke="#a9aeb6" stroke-width="1.7" stroke-linejoin="round"/><path d="M12.5 9V15.5" stroke="#a9aeb6" stroke-width="1.8"/><circle cx="12.5" cy="18.5" r="1.1" fill="#a9aeb6"/></svg>
<div class="t" style="left:152.6px;top:1355.10px;font-size:18px;line-height:18px;color:#a9aeb6;font-family:'Liberation Sans', sans-serif;">0</div>
<svg class="r" style="left:190px;top:1349px;" width="26" height="24" viewBox="0 0 26 24"><path d="M2 10H18V15Q18 22 10 22Q2 22 2 15Z" fill="none" stroke="#a9aeb6" stroke-width="1.7"/><path d="M18 12.5Q23.5 12 23.5 15.5Q23.5 19 17.5 18.5" fill="none" stroke="#a9aeb6" stroke-width="1.7"/><path d="M5.5 1.5L7 6.5M9.5 1.5L11 6.5M13.5 1.5L15 6.5" stroke="#a9aeb6" stroke-width="1.3"/></svg>
<div class="t" style="transform:scaleX(0.9634);left:219.2px;top:1355.10px;font-size:18px;line-height:18px;color:#a9aeb6;font-family:'Liberation Sans', sans-serif;">Java: Ready</div>
<div class="t" style="transform:scaleX(0.9644);left:1522.4px;top:1354.88px;font-size:18.5px;line-height:18.5px;color:#a9aeb6;font-family:'Liberation Sans', sans-serif;">Ln 2, Col 1</div>
<div class="t" style="transform:scaleX(0.9370);left:1636.2px;top:1354.88px;font-size:18.5px;line-height:18.5px;color:#a9aeb6;font-family:'Liberation Sans', sans-serif;">Spaces: 4</div>
<div class="t" style="transform:scaleX(0.9462);left:1739.8px;top:1354.88px;font-size:18.5px;line-height:18.5px;color:#a9aeb6;font-family:'Liberation Sans', sans-serif;">UTF-8</div>
<div class="t" style="transform:scaleX(0.8569);left:1815.7px;top:1354.88px;font-size:18.5px;line-height:18.5px;color:#a9aeb6;font-family:'Liberation Sans', sans-serif;">CRLF</div>
<div class="t" style="transform:scaleX(1.0428);left:1919.3px;top:1354.88px;font-size:18.5px;line-height:18.5px;color:#a9aeb6;font-family:'Liberation Sans', sans-serif;">Markdown</div>
<div class="t" style="transform:scaleX(1.0474);left:2034.3px;top:1354.88px;font-size:18.5px;line-height:18.5px;color:#a9aeb6;font-family:'Liberation Sans', sans-serif;">Antigravity - Settings</div>
<div class="t" style="transform:scaleX(1.2571);left:1884.5px;top:1353.88px;font-size:18.5px;line-height:18.5px;color:#a9aeb6;font-family:'Liberation Sans', sans-serif;">{ }</div>
<svg class="r" style="left:2239px;top:1352px;" width="24" height="20" viewBox="0 0 24 20"><path d="M1.5 10L8 17L22.5 1.5" fill="none" stroke="#4ec9a6" stroke-width="1.9"/></svg>
<div class="t" style="transform:scaleX(1.0173);left:2269px;top:1354.88px;font-size:18.5px;line-height:18.5px;color:#4ec9a6;font-family:'Liberation Sans', sans-serif;">Accept ON</div>
<svg class="r" style="left:2388px;top:1352px;" width="24" height="20" viewBox="0 0 24 20"><path d="M1.5 10L8 17L22.5 1.5" fill="none" stroke="#4ec9a6" stroke-width="1.9"/></svg>
<div class="t" style="transform:scaleX(0.9980);left:2417.7px;top:1354.88px;font-size:18.5px;line-height:18.5px;color:#4ec9a6;font-family:'Liberation Sans', sans-serif;">Scroll ON</div>
<svg class="r" style="left:2524px;top:1349px;" width="24" height="26" viewBox="0 0 24 26"><path d="M3 18.5V11Q3 3 12 3Q21 3 21 11V18.5L22.5 20H1.5Z" fill="none" stroke="#a9aeb6" stroke-width="1.7" stroke-linejoin="round"/><path d="M9 21.5Q12 25 15 21.5" fill="none" stroke="#a9aeb6" stroke-width="1.7"/></svg>
<div class="r" style="left:552px;top:50px;width:480px;height:92px;border:5px solid #fde321;"></div>
<div class="r" style="left:88px;top:177px;width:322px;height:81px;border:5px solid #fde321;"></div>
<div class="r" style="left:88.5px;top:730px;width:190.5px;height:52px;border:5px solid #fde321;"></div>
<div class="r" style="left:1765.5px;top:100px;width:768.5px;height:524px;border:5px solid #fde321;"></div>
<div class="r badge" style="left:509px;top:81px;"></div>
<svg class="r" style="left:523.3px;top:90.2px;" width="14" height="24" viewBox="0 0 14 24"><path d="M7.4 1.2V21.8" stroke="#fff" stroke-width="3.3"/><path d="M8.4 1.6L1.4 7.6" stroke="#fff" stroke-width="2.7"/></svg>
<div class="r badge" style="left:39px;top:203px;"></div>
<div class="t" style="left:50.8px;top:209.75px;font-size:29px;line-height:29px;color:#ffffff;font-family:'Liberation Sans', sans-serif;">3</div>
<div class="r badge" style="left:38px;top:741px;"></div>
<div class="t" style="left:49.8px;top:747.75px;font-size:29px;line-height:29px;color:#ffffff;font-family:'Liberation Sans', sans-serif;">2</div>
<div class="r badge" style="left:1713px;top:384px;"></div>
<svg class="r" style="left:1727.3px;top:393.2px;" width="14" height="24" viewBox="0 0 14 24"><path d="M7.4 1.2V21.8" stroke="#fff" stroke-width="3.3"/><path d="M8.4 1.6L1.4 7.6" stroke="#fff" stroke-width="2.7"/></svg>
<div class="r badge" style="left:1712px;top:473px;"></div>
<div class="t" style="left:1723.8px;top:479.75px;font-size:29px;line-height:29px;color:#ffffff;font-family:'Liberation Sans', sans-serif;">2</div>
<div class="r badge" style="left:1711px;top:563px;"></div>
<div class="t" style="left:1722.8px;top:569.75px;font-size:29px;line-height:29px;color:#ffffff;font-family:'Liberation Sans', sans-serif;">3</div>
</body></html>
